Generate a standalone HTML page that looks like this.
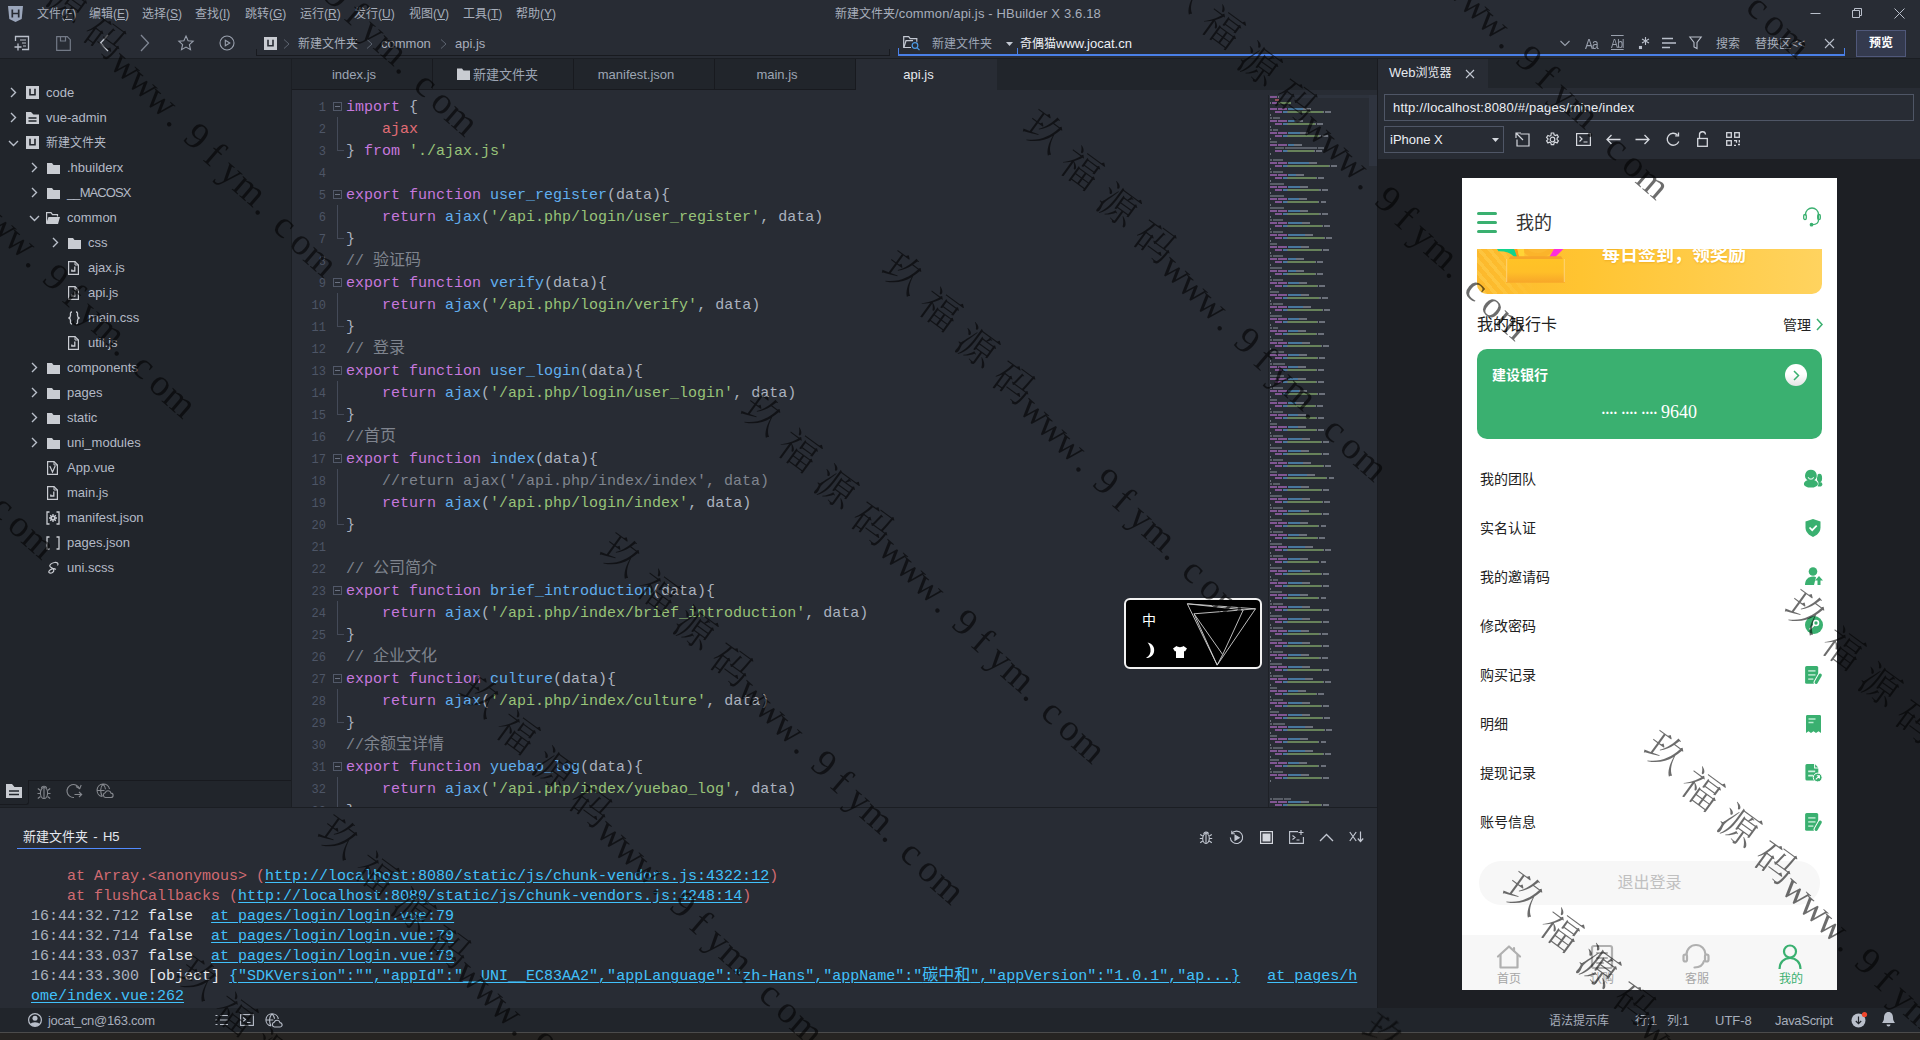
<!DOCTYPE html>
<html lang="zh-CN">
<head>
<meta charset="utf-8">
<title>新建文件夹/common/api.js - HBuilder X 3.6.18</title>
<style>
*{box-sizing:border-box;margin:0;padding:0}
html,body{width:1920px;height:1040px;overflow:hidden;background:#282c34}
body{position:relative;font-family:"Liberation Sans","Noto Sans CJK SC",sans-serif;font-size:12px;color:#abb2bf;-webkit-font-smoothing:antialiased}
.abs{position:absolute}
svg{display:block;overflow:visible}
.l{font-size:13px}
/* ---------- top bars ---------- */
#top{position:absolute;left:0;top:0;width:1920px;height:58px;background:#282c34}
#topline{position:absolute;left:0;top:58px;width:1920px;height:1px;background:#1b1e23}
.menu{position:absolute;top:6px;height:16px;line-height:16px;font-size:12px;color:#a7aebb;white-space:pre}
#title{position:absolute;top:6px;left:835px;font-size:12px;line-height:16px;color:#a7aebb;white-space:pre}
.tbi{position:absolute;top:33px}
.crumb{position:absolute;top:36px;line-height:16px;white-space:pre;color:#a7aebb}
/* ---------- sidebar ---------- */
#side{position:absolute;left:0;top:59px;width:291px;height:748px;background:#21252b}
#sideline{position:absolute;left:291px;top:59px;width:1px;height:748px;background:#1b1e23}
.tr{position:absolute;left:0;height:25px;line-height:25px;white-space:pre;color:#b4bac6}
.tr .t{position:absolute;top:0}
.ar{position:absolute;top:7px}
.ic{position:absolute;top:6px}
/* ---------- editor ---------- */
#tabs{position:absolute;left:292px;top:59px;width:1085px;height:31px;background:#21252b;z-index:1}
.tab{position:absolute;top:0;height:31px;line-height:32px;padding-right:16px;text-align:center;font-size:13px;color:#9da5b4;border-right:1px solid #181a1f;border-bottom:1px solid #181a1f;white-space:pre}
.tab.on{background:#282c34;color:#e6e9ef;border:none}
#editor{position:absolute;left:292px;top:89px;width:1085px;height:718px;background:#282c34;overflow:hidden}
#code{position:absolute;left:0;top:8px;font-family:"Liberation Mono","Noto Sans CJK SC",monospace;font-size:15px;line-height:22px;color:#abb2bf}
#code div{height:22px;position:relative}
#code .n{position:absolute;left:0;width:34px;text-align:right;font-size:12px;color:#4d5566;font-family:"Liberation Mono",monospace}
#code .c{position:absolute;left:54px;white-space:pre}
.k{color:#c678dd}.f{color:#61afef}.s{color:#98c379}.r{color:#e06c75}.m{color:#7f848e}
.fb{position:absolute;left:41px;top:5px;width:9px;height:9px;border:1px solid #515868}
.fb:after{content:"";position:absolute;left:1px;top:3px;width:5px;height:1px;background:#6b7282}
.fl{position:absolute;left:45px;top:-2px;width:1px;height:22px;background:#444a58}
.fe{position:absolute;left:45px;top:-2px;width:7px;height:12px;border-left:1px solid #444a58;border-bottom:1px solid #444a58}
/* ---------- console ---------- */
#consline{position:absolute;left:0;top:807px;width:1377px;height:1px;background:#1b1e23}
#cons{position:absolute;left:0;top:808px;width:1377px;height:200px;background:#282c34}
#log{position:absolute;left:31px;top:59px;font-family:"Liberation Mono","Noto Sans CJK SC",monospace;font-size:15px;line-height:20px;white-space:pre;color:#abb2bf}
#log .lk{color:#41c1fb;text-underline-offset:2px;text-decoration:underline}
#log .e{color:#d16b72}
#log .w{color:#e6e9ef}
/* ---------- right panel ---------- */
#rp{position:absolute;left:1377px;top:59px;width:543px;height:949px;background:#1d1f24;border-left:1px solid #191b20}
#rph{position:absolute;left:0;top:0;width:542px;height:100px;background:#282c34}
#rptabs{position:absolute;left:0;top:0;width:542px;height:29px;background:#21252b}
/* ---------- status ---------- */
#status{position:absolute;left:0;top:1008px;width:1920px;height:24px;background:#21252b}
#bottom{position:absolute;left:0;top:1032px;width:1920px;height:8px;background:#262422;border-top:1px solid #4b4b4b}
.st{position:absolute;top:5px;line-height:16px;white-space:pre;color:#a7aebb}

/* ---------- minimap ---------- */
#mmline{position:absolute;left:976px;top:6px;width:1px;height:712px;background:#1e2127}
#mmview{position:absolute;left:977px;top:6px;width:108px;height:3px;background:#2d323c}
#mmthumb{position:absolute;left:1077px;top:6px;width:8px;height:71px;background:#2f343f}
#mm{position:absolute;left:978px;top:7px}
/* ---------- phone ---------- */
#phone{position:absolute;left:84px;top:119px;width:375px;height:812px;background:#fff;overflow:hidden;font-family:"Liberation Sans","Noto Sans CJK SC",sans-serif;color:#222}
#phead{position:absolute;left:0;top:0;width:375px;height:71px;background:#fff}
#banner{position:absolute;left:15px;top:71px;width:345px;height:45px;border-radius:0 0 10px 10px;background:linear-gradient(90deg,#fcb92d,#ffc431 30%,#ffd35f);overflow:hidden}
#stripes{position:absolute;left:0;top:0;width:60px;height:45px;background:repeating-linear-gradient(50deg,rgba(255,255,255,0) 0 4.5px,rgba(255,214,90,.4) 4.5px 8px);-webkit-mask-image:linear-gradient(90deg,#000 30%,transparent)}
#card{position:absolute;left:15px;top:171px;width:345px;height:90px;border-radius:10px;background:#3ab070}
.row{position:absolute;left:18px;font-size:14px;line-height:24px;color:#222;white-space:pre}
#ptab{position:absolute;left:0;top:757px;width:375px;height:55px;background:#f7f7f7}
.pt{position:absolute;top:36px;width:50px;text-align:center;font-size:12px;line-height:16px;color:#a6a6a6;white-space:pre}
/* ---------- ime ---------- */
#ime{position:absolute;left:1124px;top:598px;width:138px;height:71px;background:#000;border:2px solid #f2f2f2;border-radius:6px}
.cj{font-size:16px;line-height:0}
#wm{position:absolute;left:0;top:0;pointer-events:none;z-index:10}
</style>
</head>
<body>
<!-- ===== title / menu bar ===== -->
<div id="top">
<svg class="abs" style="left:8px;top:6px" width="15" height="16" viewBox="0 0 15 16"><path d="M0 0h15l-1.3 13L7.5 16 1.3 13z" fill="#9ba6bb"/><path d="M4.3 3.5v8M10.7 3.5v8M4.3 7.5h6.4" stroke="#282c34" stroke-width="1.7" fill="none"/></svg>
<span class="menu" style="left:37px">文件(<u>F</u>)</span>
<span class="menu" style="left:89px">编辑(<u>E</u>)</span>
<span class="menu" style="left:142px">选择(<u>S</u>)</span>
<span class="menu" style="left:195px">查找(<u>I</u>)</span>
<span class="menu" style="left:245px">跳转(<u>G</u>)</span>
<span class="menu" style="left:300px">运行(<u>R</u>)</span>
<span class="menu" style="left:354px">发行(<u>U</u>)</span>
<span class="menu" style="left:409px">视图(<u>V</u>)</span>
<span class="menu" style="left:463px">工具(<u>T</u>)</span>
<span class="menu" style="left:516px">帮助(<u>Y</u>)</span>
<span id="title">新建文件夹<span class="l" style="letter-spacing:.15px">/common/api.js - HBuilder X 3.6.18</span></span>
<!-- window buttons -->
<svg class="abs" style="left:1810px;top:8px" width="100" height="12" viewBox="0 0 100 12" fill="none" stroke="#b9bfca" stroke-width="1"><path d="M0.5 5.5h10"/><path d="M42.500 2.500h7v7h-7zM44.500 2.500v-2h7v7h-2"/><path d="M84.500 0.500l10 10M94.500 0.500l-10 10"/></svg>
<!-- toolbar icons -->
<svg class="abs" style="left:14px;top:35px" width="16" height="16" viewBox="0 0 16 16" fill="none" stroke="#b9bfca" stroke-width="1.3"><path d="M1.500 6V1.500h13v13H8"/><path d="M6 5h6M8 8h4M9 11h3" stroke-width="1.1"/><path d="M4 8.500v7M0.500 12h7"/></svg>
<svg class="abs" style="left:56px;top:36px" width="15" height="15" viewBox="0 0 15 15" fill="none" stroke="#737a87" stroke-width="1.2"><path d="M0.700 0.700h10.600l3 3v10.600H0.700z"/><path d="M4.500 0.700v4.300h5V0.700"/></svg>
<svg class="abs" style="left:99px;top:34px" width="10" height="18" viewBox="0 0 10 18" fill="none" stroke="#c3c8d2" stroke-width="1.4"><path d="M9 1L1.500 9 9 17"/></svg>
<svg class="abs" style="left:140px;top:34px" width="10" height="18" viewBox="0 0 10 18" fill="none" stroke="#7f8693" stroke-width="1.3"><path d="M1 1l7.500 8L1 17"/></svg>
<svg class="abs" style="left:178px;top:35px" width="16" height="16" viewBox="0 0 16 16" fill="none" stroke="#9aa1ae" stroke-width="1.1"><path d="M8 1l2.100 4.700 5.100.500-3.800 3.500 1.100 5L8 12.100 3.500 14.700l1.100-5L.800 6.200l5.100-.5z"/></svg>
<svg class="abs" style="left:219px;top:35px" width="16" height="16" viewBox="0 0 16 16" fill="none" stroke="#9aa1ae" stroke-width="1.1"><circle cx="8" cy="8" r="7"/><path d="M6.300 5.200v5.600L10.800 8z"/></svg>
<svg class="abs" style="left:263.500px;top:36.500px" width="13" height="13" viewBox="0 0 13 13"><rect width="13" height="13" fill="#c9ccd2"/><path d="M4 2.800v6h5v-6" fill="none" stroke="#282c34" stroke-width="1.600"/></svg>
<svg class="abs" style="left:283px;top:39px" width="7" height="10" viewBox="0 0 7 10" fill="none" stroke="#5d6470" stroke-width="1"><path d="M1 .5l5 4.500L1 9.500"/></svg>
<span class="crumb" style="left:298px">新建文件夹</span>
<svg class="abs" style="left:366px;top:39px" width="7" height="10" viewBox="0 0 7 10" fill="none" stroke="#5d6470" stroke-width="1"><path d="M1 .5l5 4.500L1 9.500"/></svg>
<span class="crumb l" style="left:381px">common</span>
<svg class="abs" style="left:440px;top:39px" width="7" height="10" viewBox="0 0 7 10" fill="none" stroke="#5d6470" stroke-width="1"><path d="M1 .5l5 4.500L1 9.500"/></svg>
<span class="crumb l" style="left:455px">api.js</span>
<div class="abs" style="left:256px;top:49px;width:634px;height:7px;border:1px solid #181a1f;border-top:none"></div>
<!-- search box -->
<div class="abs" style="left:898px;top:48px;width:947px;height:8px;border:1px solid #4a80e8;border-top:none;border-bottom-width:2px"></div>
<div class="abs" style="left:1017px;top:48px;width:1px;height:7px;background:#4a80e8"></div>
<svg class="abs" style="left:903px;top:36px" width="18" height="15" viewBox="0 0 18 15" fill="none" stroke="#c3c8d2" stroke-width="1.2"><path d="M8 11.500H.700V.700h5l1.500 2h6.600v3"/><path d="M1 11l2-6.300h7"/><circle cx="12" cy="9.500" r="2.800" stroke="#4d9be6"/><path d="M14 11.700l2.500 2.500" stroke="#4d9be6"/></svg>
<span class="crumb" style="left:932px;color:#9da5b4">新建文件夹</span>
<svg class="abs" style="left:1006px;top:42px" width="7" height="4" viewBox="0 0 7 4"><path d="M0 0h7L3.500 4z" fill="#c3c8d2"/></svg>
<span class="crumb" style="left:1020px;color:#eceff4">奇偶猫<span class="l">www.jocat.cn</span></span>
<svg class="abs" style="left:1560px;top:40px" width="10" height="7" viewBox="0 0 10 7" fill="none" stroke="#9aa1ae" stroke-width="1.1"><path d="M.5 1l4.500 4.500L9.500 1"/></svg>
<span class="crumb" style="left:1585px;font-size:14px;letter-spacing:-1px;color:#9aa1ae;transform:scaleX(.85);transform-origin:0 50%">Aa</span>
<span class="crumb" style="left:1611px;font-size:13px;letter-spacing:-1px;color:#9aa1ae;transform:scaleX(.8);transform-origin:0 50%;text-decoration:underline overline">Abl</span>
<svg class="abs" style="left:1639px;top:36px" width="11" height="14" viewBox="0 0 11 14" fill="none" stroke="#b9bfca" stroke-width="1.1"><path d="M6.500 1v8M3 3l7 4M10 3L3 7"/><rect x=".5" y="10.500" width="2" height="2" fill="#b9bfca"/></svg>
<svg class="abs" style="left:1662px;top:37px" width="14" height="12" viewBox="0 0 14 12" fill="none" stroke="#b9bfca" stroke-width="1.3"><path d="M0 1.500h11M0 6h14M0 10.500h8"/></svg>
<svg class="abs" style="left:1689px;top:36px" width="13" height="14" viewBox="0 0 13 14" fill="none" stroke="#b9bfca" stroke-width="1.1"><path d="M.8 1h11.400L8 6.500v6L5 11V6.500z"/></svg>
<span class="crumb" style="left:1716px">搜索</span>
<span class="crumb" style="left:1755px">替换区&lt;&lt;</span>
<svg class="abs" style="left:1824px;top:38px" width="11" height="11" viewBox="0 0 11 11" fill="none" stroke="#b9bfca" stroke-width="1.1"><path d="M1 1l9 9M10 1l-9 9"/></svg>
<div class="abs" style="left:1856px;top:30px;width:50px;height:27px;background:#343a4e;border:1px solid #50587a;color:#fff;font-weight:bold;text-align:center;line-height:25px;font-size:12px">预览</div>
</div>
<div id="topline"></div>

<!-- ===== project tree ===== -->
<div id="side">
<svg class="abs" style="left:10px;top:28px" width="7" height="11" viewBox="0 0 7 11" fill="none" stroke="#b9bfca" stroke-width="1.4"><path d="M1 1l4.500 4.500L1 10"/></svg><svg class="abs" style="left:25.5px;top:27px" width="13" height="13" viewBox="0 0 13 13" ><rect width="13" height="13" fill="#c9ccd2"/><path d="M4 2.800v6h5v-6" fill="none" stroke="#21252b" stroke-width="1.600"/></svg><span class="tr l" style="left:46px;top:21px">code</span>
<svg class="abs" style="left:10px;top:53px" width="7" height="11" viewBox="0 0 7 11" fill="none" stroke="#b9bfca" stroke-width="1.4"><path d="M1 1l4.500 4.500L1 10"/></svg><svg class="abs" style="left:25.5px;top:53px" width="13" height="12" viewBox="0 0 13 12" ><path d="M0 0h5l2.500 2.500H13V12H0z" fill="#c9ccd2"/><path d="M2.500 6h8M2.500 9h8" stroke="#21252b" stroke-width="1.500"/></svg><span class="tr l" style="left:46px;top:46px">vue-admin</span>
<svg class="abs" style="left:8px;top:81px" width="11" height="7" viewBox="0 0 11 7" fill="none" stroke="#b9bfca" stroke-width="1.4"><path d="M1 1l4.500 4.500L10 1"/></svg><svg class="abs" style="left:25.5px;top:77px" width="13" height="13" viewBox="0 0 13 13" ><rect width="13" height="13" fill="#c9ccd2"/><path d="M4 2.800v6h5v-6" fill="none" stroke="#21252b" stroke-width="1.600"/></svg><span class="tr" style="left:46px;top:72px">新建文件夹</span>
<svg class="abs" style="left:31px;top:103px" width="7" height="11" viewBox="0 0 7 11" fill="none" stroke="#b9bfca" stroke-width="1.4"><path d="M1 1l4.500 4.500L1 10"/></svg><svg class="abs" style="left:46.5px;top:104px" width="13" height="11" viewBox="0 0 13 11" ><path d="M0 0h5l1.500 2H13v9H0z" fill="#c9ccd2"/></svg><span class="tr l" style="left:67px;top:96px">.hbuilderx</span>
<svg class="abs" style="left:31px;top:128px" width="7" height="11" viewBox="0 0 7 11" fill="none" stroke="#b9bfca" stroke-width="1.4"><path d="M1 1l4.500 4.500L1 10"/></svg><svg class="abs" style="left:46.5px;top:129px" width="13" height="11" viewBox="0 0 13 11" ><path d="M0 0h5l1.500 2H13v9H0z" fill="#c9ccd2"/></svg><span class="tr l" style="left:67px;top:121px;letter-spacing:-.9px">__MACOSX</span>
<svg class="abs" style="left:29px;top:156px" width="11" height="7" viewBox="0 0 11 7" fill="none" stroke="#b9bfca" stroke-width="1.4"><path d="M1 1l4.500 4.500L10 1"/></svg><svg class="abs" style="left:46px;top:153px" width="14" height="12" viewBox="0 0 14 12" ><path d="M.600 11V.600h4.400l1.500 2H11.500v2" fill="none" stroke="#c9ccd2" stroke-width="1.200"/><path d="M2.500 5H14l-2 7H0z" fill="#c9ccd2"/></svg><span class="tr l" style="left:67px;top:146px">common</span>
<svg class="abs" style="left:52px;top:178px" width="7" height="11" viewBox="0 0 7 11" fill="none" stroke="#b9bfca" stroke-width="1.4"><path d="M1 1l4.500 4.500L1 10"/></svg><svg class="abs" style="left:67.5px;top:179px" width="13" height="11" viewBox="0 0 13 11" ><path d="M0 0h5l1.500 2H13v9H0z" fill="#c9ccd2"/></svg><span class="tr l" style="left:88px;top:171px">css</span>
<svg class="abs" style="left:68px;top:202px" width="11" height="14" viewBox="0 0 11 14" ><path d="M.600.600h6.400l3.400 3.400v9.400H.600z" fill="none" stroke="#c9ccd2" stroke-width="1.200"/><path d="M7 .6v3.400h3.400" fill="none" stroke="#c9ccd2" stroke-width="1"/><path d="M6.800 5.500v4.500H3.800V8.500" fill="none" stroke="#c9ccd2" stroke-width="1.300"/></svg><span class="tr l" style="left:88px;top:196px">ajax.js</span>
<svg class="abs" style="left:68px;top:227px" width="11" height="14" viewBox="0 0 11 14" ><path d="M.600.600h6.400l3.400 3.400v9.400H.600z" fill="none" stroke="#c9ccd2" stroke-width="1.200"/><path d="M7 .6v3.400h3.400" fill="none" stroke="#c9ccd2" stroke-width="1"/><path d="M6.800 5.500v4.500H3.800V8.500" fill="none" stroke="#c9ccd2" stroke-width="1.300"/></svg><span class="tr l" style="left:88px;top:221px">api.js</span>
<svg class="abs" style="left:67px;top:252px" width="14" height="14" viewBox="0 0 14 14" ><path d="M5 1C3 1 3.500 3 3.500 4.500S3 6.700 1.500 7C3 7.300 3.500 8 3.500 9.500S3 13 5 13M9 1c2 0 1.500 2 1.500 3.500s.5 2.200 2 2.500c-1.500.300-2 1-2 2.500s.5 3.500-1.500 3.500" fill="none" stroke="#c9ccd2" stroke-width="1.300"/></svg><span class="tr l" style="left:88px;top:246px">main.css</span>
<svg class="abs" style="left:68px;top:277px" width="11" height="14" viewBox="0 0 11 14" ><path d="M.600.600h6.400l3.400 3.400v9.400H.600z" fill="none" stroke="#c9ccd2" stroke-width="1.200"/><path d="M7 .6v3.400h3.400" fill="none" stroke="#c9ccd2" stroke-width="1"/><path d="M6.800 5.500v4.500H3.800V8.500" fill="none" stroke="#c9ccd2" stroke-width="1.300"/></svg><span class="tr l" style="left:88px;top:271px">util.js</span>
<svg class="abs" style="left:31px;top:303px" width="7" height="11" viewBox="0 0 7 11" fill="none" stroke="#b9bfca" stroke-width="1.4"><path d="M1 1l4.500 4.500L1 10"/></svg><svg class="abs" style="left:46.5px;top:304px" width="13" height="11" viewBox="0 0 13 11" ><path d="M0 0h5l1.500 2H13v9H0z" fill="#c9ccd2"/></svg><span class="tr l" style="left:67px;top:296px">components</span>
<svg class="abs" style="left:31px;top:328px" width="7" height="11" viewBox="0 0 7 11" fill="none" stroke="#b9bfca" stroke-width="1.4"><path d="M1 1l4.500 4.500L1 10"/></svg><svg class="abs" style="left:46.5px;top:329px" width="13" height="11" viewBox="0 0 13 11" ><path d="M0 0h5l1.500 2H13v9H0z" fill="#c9ccd2"/></svg><span class="tr l" style="left:67px;top:321px">pages</span>
<svg class="abs" style="left:31px;top:353px" width="7" height="11" viewBox="0 0 7 11" fill="none" stroke="#b9bfca" stroke-width="1.4"><path d="M1 1l4.500 4.500L1 10"/></svg><svg class="abs" style="left:46.5px;top:354px" width="13" height="11" viewBox="0 0 13 11" ><path d="M0 0h5l1.500 2H13v9H0z" fill="#c9ccd2"/></svg><span class="tr l" style="left:67px;top:346px">static</span>
<svg class="abs" style="left:31px;top:378px" width="7" height="11" viewBox="0 0 7 11" fill="none" stroke="#b9bfca" stroke-width="1.4"><path d="M1 1l4.500 4.500L1 10"/></svg><svg class="abs" style="left:46.5px;top:379px" width="13" height="11" viewBox="0 0 13 11" ><path d="M0 0h5l1.500 2H13v9H0z" fill="#c9ccd2"/></svg><span class="tr l" style="left:67px;top:371px">uni_modules</span>
<svg class="abs" style="left:47px;top:402px" width="11" height="14" viewBox="0 0 11 14" ><path d="M.600.600h6.400l3.400 3.400v9.400H.600z" fill="none" stroke="#c9ccd2" stroke-width="1.200"/><path d="M7 .6v3.400h3.400" fill="none" stroke="#c9ccd2" stroke-width="1"/><path d="M2.800 5l2.700 6 2.700-6" fill="none" stroke="#c9ccd2" stroke-width="1.200"/></svg><span class="tr l" style="left:67px;top:396px">App.vue</span>
<svg class="abs" style="left:47px;top:427px" width="11" height="14" viewBox="0 0 11 14" ><path d="M.600.600h6.400l3.400 3.400v9.400H.600z" fill="none" stroke="#c9ccd2" stroke-width="1.200"/><path d="M7 .6v3.400h3.400" fill="none" stroke="#c9ccd2" stroke-width="1"/><path d="M6.800 5.500v4.500H3.800V8.500" fill="none" stroke="#c9ccd2" stroke-width="1.300"/></svg><span class="tr l" style="left:67px;top:421px">main.js</span>
<svg class="abs" style="left:46px;top:452px" width="14" height="14" viewBox="0 0 14 14" ><path d="M3.500 1H1v12h2.500M10.500 1H13v12h-2.500" fill="none" stroke="#c9ccd2" stroke-width="1.300"/><circle cx="7" cy="7" r="2.600" fill="#c9ccd2"/><path d="M7 3v8M3 7h8M4.200 4.200l5.600 5.600M9.800 4.200L4.200 9.800" stroke="#c9ccd2" stroke-width="1.300"/><circle cx="7" cy="7" r="1" fill="#21252b"/></svg><span class="tr l" style="left:67px;top:446px">manifest.json</span>
<svg class="abs" style="left:46px;top:477px" width="14" height="14" viewBox="0 0 14 14" ><path d="M3.500 1H1v12h2.500M10.500 1H13v12h-2.500" fill="none" stroke="#c9ccd2" stroke-width="1.300"/></svg><span class="tr l" style="left:67px;top:471px">pages.json</span>
<svg class="abs" style="left:46px;top:502px" width="14" height="14" viewBox="0 0 14 14" ><path d="M11.500 4.500C13 2.500 11 1 8.500 1.500 5.500 2 3 4 4 5.500c1 1.500 3.500 1.500 3.800 3.500.3 2-2.300 3.500-4 3-1.700-.5-1-2.500 1-3.500s4-1 5 0" fill="none" stroke="#c9ccd2" stroke-width="1.200"/></svg><span class="tr l" style="left:67px;top:496px">uni.scss</span>
<div class="abs" style="left:0;top:721px;width:291px;height:1px;background:#181a1f"></div>
<div class="abs" style="left:0;top:721px;width:29px;height:25px;background:#21252b;border-right:1px solid #181a1f;border-bottom:1px solid #181a1f;border-radius:0 0 3px 0"></div>
<svg class="abs" style="left:6px;top:725px" width="16" height="14" viewBox="0 0 16 14" ><path d="M0 0h6l2.500 3H16v11H0z" fill="#c9ccd2"/><path d="M3 7h10M3 10.500h10" stroke="#21252b" stroke-width="1.600"/></svg>
<svg class="abs" style="left:37px;top:725px" width="14" height="16" viewBox="0 0 14 16" fill="none" stroke="#85888e" stroke-width="1.100"><ellipse cx="7" cy="9" rx="3.600" ry="5.500"/><path d="M7 3.500v11M4.500 4.200C4.500 1.500 9.500 1.500 9.500 4.200M3.500 6.500L.800 4.500M3.400 9.500H.5M3.500 12.500L.800 14.500M10.500 6.500l2.700-2M10.600 9.500h2.900M10.500 12.500l2.700 2"/></svg>
<svg class="abs" style="left:66px;top:724px" width="17" height="16" viewBox="0 0 17 16" fill="none" stroke="#85888e" stroke-width="1.100"><path d="M13.500 5.500A6.500 6.500 0 1 0 8 14.500"/><path d="M10 3.500l3.700 2.200 1.500-3.700M8.500 11.500h7M13 9l2.700 2.500L13 14"/></svg>
<svg class="abs" style="left:96px;top:724px" width="17" height="16" viewBox="0 0 17 16" fill="none" stroke="#85888e" stroke-width="1.100"><path d="M6 13.500A6.300 6.300 0 1 1 13.500 6M1 7.500h7.500M7 1.200C4 4 4 10 6.500 13.500M7 1.200c1.500 1.500 2.300 3.300 2.500 5"/><path d="M9.500 14.500h5.300a2.200 2.200 0 0 0 .2-4.400 3 3 0 0 0-5.800-.3 2.400 2.400 0 0 0 .3 4.700z"/></svg>
</div><div id="sideline"></div>
<!-- ===== editor tabs ===== -->
<div id="tabs">
<div class="tab" style="left:0;width:141px">index.js</div>
<div class="tab" style="left:141px;width:141px;padding-left:5px"><svg style="display:inline-block;vertical-align:-1px;margin-right:3px" width="13" height="12" viewBox="0 0 13 12"><path d="M0 .5h5l1.500 2H13V12H0z" fill="#c9ccd2"/></svg><span style="font-size:13px">新建文件夹</span></div>
<div class="tab" style="left:282px;width:141px">manifest.json</div>
<div class="tab" style="left:423px;width:141px">main.js</div>
<div class="tab on" style="left:564px;width:141px">api.js</div>
</div>

<!-- ===== editor ===== -->
<div id="editor"><div id="code">
<div><span class="n">1</span><i class="fb"></i><span class="c"><span class="k">import</span> {</span></div>
<div><span class="n">2</span><i class="fl"></i><span class="c">    <span class="r">ajax</span></span></div>
<div><span class="n">3</span><i class="fe"></i><span class="c">} <span class="k">from</span> <span class="s">'./ajax.js'</span></span></div>
<div><span class="n">4</span><span class="c"></span></div>
<div><span class="n">5</span><i class="fb"></i><span class="c"><span class="k">export</span> <span class="k">function</span> <span class="f">user_register</span>(data){</span></div>
<div><span class="n">6</span><i class="fl"></i><span class="c">    <span class="k">return</span> <span class="f">ajax</span>(<span class="s">'/api.php/login/user_register'</span>, data)</span></div>
<div><span class="n">7</span><i class="fe"></i><span class="c">}</span></div>
<div><span class="n">8</span><span class="c"><span class="m">// <span class="cj">验证码</span></span></span></div>
<div><span class="n">9</span><i class="fb"></i><span class="c"><span class="k">export</span> <span class="k">function</span> <span class="f">verify</span>(data){</span></div>
<div><span class="n">10</span><i class="fl"></i><span class="c">    <span class="k">return</span> <span class="f">ajax</span>(<span class="s">'/api.php/login/verify'</span>, data)</span></div>
<div><span class="n">11</span><i class="fe"></i><span class="c">}</span></div>
<div><span class="n">12</span><span class="c"><span class="m">// <span class="cj">登录</span></span></span></div>
<div><span class="n">13</span><i class="fb"></i><span class="c"><span class="k">export</span> <span class="k">function</span> <span class="f">user_login</span>(data){</span></div>
<div><span class="n">14</span><i class="fl"></i><span class="c">    <span class="k">return</span> <span class="f">ajax</span>(<span class="s">'/api.php/login/user_login'</span>, data)</span></div>
<div><span class="n">15</span><i class="fe"></i><span class="c">}</span></div>
<div><span class="n">16</span><span class="c"><span class="m">//<span class="cj">首页</span></span></span></div>
<div><span class="n">17</span><i class="fb"></i><span class="c"><span class="k">export</span> <span class="k">function</span> <span class="f">index</span>(data){</span></div>
<div><span class="n">18</span><i class="fl"></i><span class="c">    <span class="m">//return ajax('/api.php/index/index', data)</span></span></div>
<div><span class="n">19</span><i class="fl"></i><span class="c">    <span class="k">return</span> <span class="f">ajax</span>(<span class="s">'/api.php/login/index'</span>, data)</span></div>
<div><span class="n">20</span><i class="fe"></i><span class="c">}</span></div>
<div><span class="n">21</span><span class="c"></span></div>
<div><span class="n">22</span><span class="c"><span class="m">// <span class="cj">公司简介</span></span></span></div>
<div><span class="n">23</span><i class="fb"></i><span class="c"><span class="k">export</span> <span class="k">function</span> <span class="f">brief_introduction</span>(data){</span></div>
<div><span class="n">24</span><i class="fl"></i><span class="c">    <span class="k">return</span> <span class="f">ajax</span>(<span class="s">'/api.php/index/brief_introduction'</span>, data)</span></div>
<div><span class="n">25</span><i class="fe"></i><span class="c">}</span></div>
<div><span class="n">26</span><span class="c"><span class="m">// <span class="cj">企业文化</span></span></span></div>
<div><span class="n">27</span><i class="fb"></i><span class="c"><span class="k">export</span> <span class="k">function</span> <span class="f">culture</span>(data){</span></div>
<div><span class="n">28</span><i class="fl"></i><span class="c">    <span class="k">return</span> <span class="f">ajax</span>(<span class="s">'/api.php/index/culture'</span>, data)</span></div>
<div><span class="n">29</span><i class="fe"></i><span class="c">}</span></div>
<div><span class="n">30</span><span class="c"><span class="m">//<span class="cj">余额宝详情</span></span></span></div>
<div><span class="n">31</span><i class="fb"></i><span class="c"><span class="k">export</span> <span class="k">function</span> <span class="f">yuebao_log</span>(data){</span></div>
<div><span class="n">32</span><i class="fl"></i><span class="c">    <span class="k">return</span> <span class="f">ajax</span>(<span class="s">'/api.php/index/yuebao_log'</span>, data)</span></div>
<div><span class="n">33</span><i class="fe"></i><span class="c">}</span></div>
</div>
<div id="mmview"></div><div id="mmthumb"></div><div id="mmline"></div>
<svg id="mm" width="110" height="712" viewBox="0 0 110 712" shape-rendering="crispEdges" style="overflow:hidden">
<rect x="0.0" y="0" width="6.9" height="2" fill="#815693"/>
<rect x="8.0" y="0" width="1.1" height="2" fill="#6c717b"/>
<rect x="4.6" y="3" width="4.6" height="2" fill="#904f58"/>
<rect x="0.0" y="6" width="1.1" height="2" fill="#6c717b"/>
<rect x="2.3" y="6" width="4.6" height="2" fill="#815693"/>
<rect x="8.0" y="6" width="12.6" height="2" fill="#67825a"/>
<rect x="0.0" y="12" width="6.9" height="2" fill="#815693"/>
<rect x="8.0" y="12" width="9.2" height="2" fill="#815693"/>
<rect x="18.4" y="12" width="14.9" height="2" fill="#47769d"/>
<rect x="33.3" y="12" width="8.0" height="2" fill="#6c717b"/>
<rect x="4.6" y="15" width="6.9" height="2" fill="#815693"/>
<rect x="12.6" y="15" width="4.6" height="2" fill="#47769d"/>
<rect x="17.2" y="15" width="1.1" height="2" fill="#6c717b"/>
<rect x="18.4" y="15" width="34.5" height="2" fill="#67825a"/>
<rect x="52.9" y="15" width="1.1" height="2" fill="#6c717b"/>
<rect x="55.2" y="15" width="5.8" height="2" fill="#6c717b"/>
<rect x="0.0" y="18" width="1.1" height="2" fill="#6c717b"/>
<rect x="0.0" y="21" width="2.3" height="2" fill="#595e67"/>
<rect x="3.4" y="21" width="6.9" height="2" fill="#595e67"/>
<rect x="0.0" y="24" width="6.9" height="2" fill="#815693"/>
<rect x="8.0" y="24" width="9.2" height="2" fill="#815693"/>
<rect x="18.4" y="24" width="6.9" height="2" fill="#47769d"/>
<rect x="25.3" y="24" width="8.0" height="2" fill="#6c717b"/>
<rect x="4.6" y="27" width="6.9" height="2" fill="#815693"/>
<rect x="12.6" y="27" width="4.6" height="2" fill="#47769d"/>
<rect x="17.2" y="27" width="1.1" height="2" fill="#6c717b"/>
<rect x="18.4" y="27" width="26.4" height="2" fill="#67825a"/>
<rect x="44.8" y="27" width="1.1" height="2" fill="#6c717b"/>
<rect x="47.1" y="27" width="5.8" height="2" fill="#6c717b"/>
<rect x="0.0" y="30" width="1.1" height="2" fill="#6c717b"/>
<rect x="0.0" y="33" width="2.3" height="2" fill="#595e67"/>
<rect x="3.4" y="33" width="4.6" height="2" fill="#595e67"/>
<rect x="0.0" y="36" width="6.9" height="2" fill="#815693"/>
<rect x="8.0" y="36" width="9.2" height="2" fill="#815693"/>
<rect x="18.4" y="36" width="11.5" height="2" fill="#47769d"/>
<rect x="29.9" y="36" width="8.0" height="2" fill="#6c717b"/>
<rect x="4.6" y="39" width="6.9" height="2" fill="#815693"/>
<rect x="12.6" y="39" width="4.6" height="2" fill="#47769d"/>
<rect x="17.2" y="39" width="1.1" height="2" fill="#6c717b"/>
<rect x="18.4" y="39" width="31.0" height="2" fill="#67825a"/>
<rect x="49.4" y="39" width="1.1" height="2" fill="#6c717b"/>
<rect x="51.7" y="39" width="5.8" height="2" fill="#6c717b"/>
<rect x="0.0" y="42" width="1.1" height="2" fill="#6c717b"/>
<rect x="0.0" y="45" width="6.9" height="2" fill="#595e67"/>
<rect x="0.0" y="48" width="6.9" height="2" fill="#815693"/>
<rect x="8.0" y="48" width="9.2" height="2" fill="#815693"/>
<rect x="18.4" y="48" width="5.8" height="2" fill="#47769d"/>
<rect x="24.1" y="48" width="8.0" height="2" fill="#6c717b"/>
<rect x="4.6" y="51" width="9.2" height="2" fill="#595e67"/>
<rect x="14.9" y="51" width="32.2" height="2" fill="#595e67"/>
<rect x="48.3" y="51" width="5.8" height="2" fill="#595e67"/>
<rect x="4.6" y="54" width="6.9" height="2" fill="#815693"/>
<rect x="12.6" y="54" width="4.6" height="2" fill="#47769d"/>
<rect x="17.2" y="54" width="1.1" height="2" fill="#6c717b"/>
<rect x="18.4" y="54" width="25.3" height="2" fill="#67825a"/>
<rect x="43.7" y="54" width="1.1" height="2" fill="#6c717b"/>
<rect x="46.0" y="54" width="5.8" height="2" fill="#6c717b"/>
<rect x="0.0" y="57" width="1.1" height="2" fill="#6c717b"/>
<rect x="0.0" y="63" width="2.3" height="2" fill="#595e67"/>
<rect x="3.4" y="63" width="9.2" height="2" fill="#595e67"/>
<rect x="0.0" y="66" width="6.9" height="2" fill="#815693"/>
<rect x="8.0" y="66" width="9.2" height="2" fill="#815693"/>
<rect x="18.4" y="66" width="20.7" height="2" fill="#47769d"/>
<rect x="39.1" y="66" width="8.0" height="2" fill="#6c717b"/>
<rect x="4.6" y="69" width="6.9" height="2" fill="#815693"/>
<rect x="12.6" y="69" width="4.6" height="2" fill="#47769d"/>
<rect x="17.2" y="69" width="1.1" height="2" fill="#6c717b"/>
<rect x="18.4" y="69" width="40.2" height="2" fill="#67825a"/>
<rect x="58.6" y="69" width="1.1" height="2" fill="#6c717b"/>
<rect x="60.9" y="69" width="5.8" height="2" fill="#6c717b"/>
<rect x="0.0" y="72" width="1.1" height="2" fill="#6c717b"/>
<rect x="0.0" y="75" width="2.3" height="2" fill="#595e67"/>
<rect x="3.4" y="75" width="9.2" height="2" fill="#595e67"/>
<rect x="0.0" y="78" width="6.9" height="2" fill="#815693"/>
<rect x="8.0" y="78" width="9.2" height="2" fill="#815693"/>
<rect x="18.4" y="78" width="8.0" height="2" fill="#47769d"/>
<rect x="26.4" y="78" width="8.0" height="2" fill="#6c717b"/>
<rect x="4.6" y="81" width="6.9" height="2" fill="#815693"/>
<rect x="12.6" y="81" width="4.6" height="2" fill="#47769d"/>
<rect x="17.2" y="81" width="1.1" height="2" fill="#6c717b"/>
<rect x="18.4" y="81" width="27.6" height="2" fill="#67825a"/>
<rect x="46.0" y="81" width="1.1" height="2" fill="#6c717b"/>
<rect x="48.3" y="81" width="5.8" height="2" fill="#6c717b"/>
<rect x="0.0" y="84" width="1.1" height="2" fill="#6c717b"/>
<rect x="0.0" y="87" width="13.8" height="2" fill="#595e67"/>
<rect x="0.0" y="90" width="6.9" height="2" fill="#815693"/>
<rect x="8.0" y="90" width="9.2" height="2" fill="#815693"/>
<rect x="18.4" y="90" width="11.5" height="2" fill="#47769d"/>
<rect x="29.9" y="90" width="8.0" height="2" fill="#6c717b"/>
<rect x="4.6" y="93" width="6.9" height="2" fill="#815693"/>
<rect x="12.6" y="93" width="4.6" height="2" fill="#47769d"/>
<rect x="17.2" y="93" width="1.1" height="2" fill="#6c717b"/>
<rect x="18.4" y="93" width="31.0" height="2" fill="#67825a"/>
<rect x="49.4" y="93" width="1.1" height="2" fill="#6c717b"/>
<rect x="51.7" y="93" width="5.8" height="2" fill="#6c717b"/>
<rect x="0.0" y="96" width="1.1" height="2" fill="#6c717b"/>
<rect x="0.0" y="99" width="13.8" height="2" fill="#595e67"/>
<rect x="0.0" y="102" width="6.9" height="2" fill="#815693"/>
<rect x="8.0" y="102" width="9.2" height="2" fill="#815693"/>
<rect x="18.4" y="102" width="10.3" height="2" fill="#47769d"/>
<rect x="28.7" y="102" width="8.0" height="2" fill="#6c717b"/>
<rect x="4.6" y="105" width="6.9" height="2" fill="#815693"/>
<rect x="12.6" y="105" width="4.6" height="2" fill="#47769d"/>
<rect x="17.2" y="105" width="1.1" height="2" fill="#6c717b"/>
<rect x="18.4" y="105" width="29.9" height="2" fill="#67825a"/>
<rect x="48.3" y="105" width="1.1" height="2" fill="#6c717b"/>
<rect x="50.6" y="105" width="5.8" height="2" fill="#6c717b"/>
<rect x="0.0" y="108" width="1.1" height="2" fill="#6c717b"/>
<rect x="0.0" y="111" width="13.8" height="2" fill="#595e67"/>
<rect x="0.0" y="114" width="6.9" height="2" fill="#815693"/>
<rect x="8.0" y="114" width="9.2" height="2" fill="#815693"/>
<rect x="18.4" y="114" width="11.5" height="2" fill="#47769d"/>
<rect x="29.9" y="114" width="8.0" height="2" fill="#6c717b"/>
<rect x="4.6" y="117" width="6.9" height="2" fill="#815693"/>
<rect x="12.6" y="117" width="4.6" height="2" fill="#47769d"/>
<rect x="17.2" y="117" width="1.1" height="2" fill="#6c717b"/>
<rect x="18.4" y="117" width="31.0" height="2" fill="#67825a"/>
<rect x="49.4" y="117" width="1.1" height="2" fill="#6c717b"/>
<rect x="51.7" y="117" width="5.8" height="2" fill="#6c717b"/>
<rect x="0.0" y="120" width="1.1" height="2" fill="#6c717b"/>
<rect x="0.0" y="123" width="2.3" height="2" fill="#595e67"/>
<rect x="3.4" y="123" width="9.2" height="2" fill="#595e67"/>
<rect x="0.0" y="126" width="6.9" height="2" fill="#815693"/>
<rect x="8.0" y="126" width="9.2" height="2" fill="#815693"/>
<rect x="18.4" y="126" width="13.8" height="2" fill="#47769d"/>
<rect x="32.2" y="126" width="8.0" height="2" fill="#6c717b"/>
<rect x="4.6" y="129" width="6.9" height="2" fill="#815693"/>
<rect x="12.6" y="129" width="4.6" height="2" fill="#47769d"/>
<rect x="17.2" y="129" width="1.1" height="2" fill="#6c717b"/>
<rect x="18.4" y="129" width="33.3" height="2" fill="#67825a"/>
<rect x="51.7" y="129" width="1.1" height="2" fill="#6c717b"/>
<rect x="54.0" y="129" width="5.8" height="2" fill="#6c717b"/>
<rect x="0.0" y="132" width="1.1" height="2" fill="#6c717b"/>
<rect x="0.0" y="135" width="2.3" height="2" fill="#595e67"/>
<rect x="3.4" y="135" width="9.2" height="2" fill="#595e67"/>
<rect x="0.0" y="138" width="6.9" height="2" fill="#815693"/>
<rect x="8.0" y="138" width="9.2" height="2" fill="#815693"/>
<rect x="18.4" y="138" width="16.1" height="2" fill="#47769d"/>
<rect x="34.5" y="138" width="8.0" height="2" fill="#6c717b"/>
<rect x="4.6" y="141" width="6.9" height="2" fill="#815693"/>
<rect x="12.6" y="141" width="4.6" height="2" fill="#47769d"/>
<rect x="17.2" y="141" width="1.1" height="2" fill="#6c717b"/>
<rect x="18.4" y="141" width="35.6" height="2" fill="#67825a"/>
<rect x="54.0" y="141" width="1.1" height="2" fill="#6c717b"/>
<rect x="56.3" y="141" width="5.8" height="2" fill="#6c717b"/>
<rect x="0.0" y="144" width="1.1" height="2" fill="#6c717b"/>
<rect x="0.0" y="147" width="6.9" height="2" fill="#595e67"/>
<rect x="0.0" y="150" width="6.9" height="2" fill="#815693"/>
<rect x="8.0" y="150" width="9.2" height="2" fill="#815693"/>
<rect x="18.4" y="150" width="12.6" height="2" fill="#47769d"/>
<rect x="31.0" y="150" width="8.0" height="2" fill="#6c717b"/>
<rect x="4.6" y="153" width="6.9" height="2" fill="#815693"/>
<rect x="12.6" y="153" width="4.6" height="2" fill="#47769d"/>
<rect x="17.2" y="153" width="1.1" height="2" fill="#6c717b"/>
<rect x="18.4" y="153" width="32.2" height="2" fill="#67825a"/>
<rect x="50.6" y="153" width="1.1" height="2" fill="#6c717b"/>
<rect x="52.9" y="153" width="5.8" height="2" fill="#6c717b"/>
<rect x="0.0" y="156" width="1.1" height="2" fill="#6c717b"/>
<rect x="0.0" y="159" width="2.3" height="2" fill="#595e67"/>
<rect x="3.4" y="159" width="9.2" height="2" fill="#595e67"/>
<rect x="0.0" y="162" width="6.9" height="2" fill="#815693"/>
<rect x="8.0" y="162" width="9.2" height="2" fill="#815693"/>
<rect x="18.4" y="162" width="8.0" height="2" fill="#47769d"/>
<rect x="26.4" y="162" width="8.0" height="2" fill="#6c717b"/>
<rect x="4.6" y="165" width="6.9" height="2" fill="#815693"/>
<rect x="12.6" y="165" width="4.6" height="2" fill="#47769d"/>
<rect x="17.2" y="165" width="1.1" height="2" fill="#6c717b"/>
<rect x="18.4" y="165" width="26.4" height="2" fill="#67825a"/>
<rect x="44.8" y="165" width="1.1" height="2" fill="#6c717b"/>
<rect x="47.1" y="165" width="5.8" height="2" fill="#6c717b"/>
<rect x="0.0" y="168" width="1.1" height="2" fill="#6c717b"/>
<rect x="0.0" y="171" width="11.5" height="2" fill="#595e67"/>
<rect x="0.0" y="174" width="6.9" height="2" fill="#815693"/>
<rect x="8.0" y="174" width="9.2" height="2" fill="#815693"/>
<rect x="18.4" y="174" width="8.0" height="2" fill="#47769d"/>
<rect x="26.4" y="174" width="8.0" height="2" fill="#6c717b"/>
<rect x="4.6" y="177" width="6.9" height="2" fill="#815693"/>
<rect x="12.6" y="177" width="4.6" height="2" fill="#47769d"/>
<rect x="17.2" y="177" width="1.1" height="2" fill="#6c717b"/>
<rect x="18.4" y="177" width="26.4" height="2" fill="#67825a"/>
<rect x="44.8" y="177" width="1.1" height="2" fill="#6c717b"/>
<rect x="47.1" y="177" width="5.8" height="2" fill="#6c717b"/>
<rect x="0.0" y="180" width="1.1" height="2" fill="#6c717b"/>
<rect x="0.0" y="183" width="2.3" height="2" fill="#595e67"/>
<rect x="3.4" y="183" width="9.2" height="2" fill="#595e67"/>
<rect x="0.0" y="186" width="6.9" height="2" fill="#815693"/>
<rect x="8.0" y="186" width="9.2" height="2" fill="#815693"/>
<rect x="18.4" y="186" width="10.3" height="2" fill="#47769d"/>
<rect x="28.7" y="186" width="8.0" height="2" fill="#6c717b"/>
<rect x="4.6" y="189" width="6.9" height="2" fill="#815693"/>
<rect x="12.6" y="189" width="4.6" height="2" fill="#47769d"/>
<rect x="17.2" y="189" width="1.1" height="2" fill="#6c717b"/>
<rect x="18.4" y="189" width="28.7" height="2" fill="#67825a"/>
<rect x="47.1" y="189" width="1.1" height="2" fill="#6c717b"/>
<rect x="49.4" y="189" width="5.8" height="2" fill="#6c717b"/>
<rect x="0.0" y="192" width="1.1" height="2" fill="#6c717b"/>
<rect x="0.0" y="195" width="9.2" height="2" fill="#595e67"/>
<rect x="0.0" y="198" width="6.9" height="2" fill="#815693"/>
<rect x="8.0" y="198" width="9.2" height="2" fill="#815693"/>
<rect x="18.4" y="198" width="12.6" height="2" fill="#47769d"/>
<rect x="31.0" y="198" width="8.0" height="2" fill="#6c717b"/>
<rect x="4.6" y="201" width="6.9" height="2" fill="#815693"/>
<rect x="12.6" y="201" width="4.6" height="2" fill="#47769d"/>
<rect x="17.2" y="201" width="1.1" height="2" fill="#6c717b"/>
<rect x="18.4" y="201" width="31.0" height="2" fill="#67825a"/>
<rect x="49.4" y="201" width="1.1" height="2" fill="#6c717b"/>
<rect x="51.7" y="201" width="5.8" height="2" fill="#6c717b"/>
<rect x="0.0" y="204" width="1.1" height="2" fill="#6c717b"/>
<rect x="0.0" y="207" width="2.3" height="2" fill="#595e67"/>
<rect x="3.4" y="207" width="9.2" height="2" fill="#595e67"/>
<rect x="0.0" y="210" width="6.9" height="2" fill="#815693"/>
<rect x="8.0" y="210" width="9.2" height="2" fill="#815693"/>
<rect x="18.4" y="210" width="14.9" height="2" fill="#47769d"/>
<rect x="33.3" y="210" width="8.0" height="2" fill="#6c717b"/>
<rect x="4.6" y="213" width="6.9" height="2" fill="#815693"/>
<rect x="12.6" y="213" width="4.6" height="2" fill="#47769d"/>
<rect x="17.2" y="213" width="1.1" height="2" fill="#6c717b"/>
<rect x="18.4" y="213" width="33.3" height="2" fill="#67825a"/>
<rect x="51.7" y="213" width="1.1" height="2" fill="#6c717b"/>
<rect x="54.0" y="213" width="5.8" height="2" fill="#6c717b"/>
<rect x="0.0" y="216" width="1.1" height="2" fill="#6c717b"/>
<rect x="0.0" y="219" width="11.5" height="2" fill="#595e67"/>
<rect x="0.0" y="222" width="6.9" height="2" fill="#815693"/>
<rect x="8.0" y="222" width="9.2" height="2" fill="#815693"/>
<rect x="18.4" y="222" width="10.3" height="2" fill="#47769d"/>
<rect x="28.7" y="222" width="8.0" height="2" fill="#6c717b"/>
<rect x="4.6" y="225" width="6.9" height="2" fill="#815693"/>
<rect x="12.6" y="225" width="4.6" height="2" fill="#47769d"/>
<rect x="17.2" y="225" width="1.1" height="2" fill="#6c717b"/>
<rect x="18.4" y="225" width="28.7" height="2" fill="#67825a"/>
<rect x="47.1" y="225" width="1.1" height="2" fill="#6c717b"/>
<rect x="49.4" y="225" width="5.8" height="2" fill="#6c717b"/>
<rect x="0.0" y="228" width="1.1" height="2" fill="#6c717b"/>
<rect x="0.0" y="231" width="2.3" height="2" fill="#595e67"/>
<rect x="3.4" y="231" width="4.6" height="2" fill="#595e67"/>
<rect x="0.0" y="234" width="6.9" height="2" fill="#815693"/>
<rect x="8.0" y="234" width="9.2" height="2" fill="#815693"/>
<rect x="18.4" y="234" width="9.2" height="2" fill="#47769d"/>
<rect x="27.6" y="234" width="8.0" height="2" fill="#6c717b"/>
<rect x="4.6" y="237" width="6.9" height="2" fill="#815693"/>
<rect x="12.6" y="237" width="4.6" height="2" fill="#47769d"/>
<rect x="17.2" y="237" width="1.1" height="2" fill="#6c717b"/>
<rect x="18.4" y="237" width="27.6" height="2" fill="#67825a"/>
<rect x="46.0" y="237" width="1.1" height="2" fill="#6c717b"/>
<rect x="48.3" y="237" width="5.8" height="2" fill="#6c717b"/>
<rect x="0.0" y="240" width="1.1" height="2" fill="#6c717b"/>
<rect x="0.0" y="243" width="2.3" height="2" fill="#595e67"/>
<rect x="3.4" y="243" width="9.2" height="2" fill="#595e67"/>
<rect x="0.0" y="246" width="6.9" height="2" fill="#815693"/>
<rect x="8.0" y="246" width="9.2" height="2" fill="#815693"/>
<rect x="18.4" y="246" width="13.8" height="2" fill="#47769d"/>
<rect x="32.2" y="246" width="8.0" height="2" fill="#6c717b"/>
<rect x="4.6" y="249" width="6.9" height="2" fill="#815693"/>
<rect x="12.6" y="249" width="4.6" height="2" fill="#47769d"/>
<rect x="17.2" y="249" width="1.1" height="2" fill="#6c717b"/>
<rect x="18.4" y="249" width="32.2" height="2" fill="#67825a"/>
<rect x="50.6" y="249" width="1.1" height="2" fill="#6c717b"/>
<rect x="52.9" y="249" width="5.8" height="2" fill="#6c717b"/>
<rect x="0.0" y="252" width="1.1" height="2" fill="#6c717b"/>
<rect x="0.0" y="255" width="13.8" height="2" fill="#595e67"/>
<rect x="0.0" y="258" width="6.9" height="2" fill="#815693"/>
<rect x="8.0" y="258" width="9.2" height="2" fill="#815693"/>
<rect x="18.4" y="258" width="10.3" height="2" fill="#47769d"/>
<rect x="28.7" y="258" width="8.0" height="2" fill="#6c717b"/>
<rect x="4.6" y="261" width="6.9" height="2" fill="#815693"/>
<rect x="12.6" y="261" width="4.6" height="2" fill="#47769d"/>
<rect x="17.2" y="261" width="1.1" height="2" fill="#6c717b"/>
<rect x="18.4" y="261" width="28.7" height="2" fill="#67825a"/>
<rect x="47.1" y="261" width="1.1" height="2" fill="#6c717b"/>
<rect x="49.4" y="261" width="5.8" height="2" fill="#6c717b"/>
<rect x="0.0" y="264" width="1.1" height="2" fill="#6c717b"/>
<rect x="0.0" y="267" width="2.3" height="2" fill="#595e67"/>
<rect x="3.4" y="267" width="11.5" height="2" fill="#595e67"/>
<rect x="0.0" y="270" width="6.9" height="2" fill="#815693"/>
<rect x="8.0" y="270" width="9.2" height="2" fill="#815693"/>
<rect x="18.4" y="270" width="9.2" height="2" fill="#47769d"/>
<rect x="27.6" y="270" width="8.0" height="2" fill="#6c717b"/>
<rect x="4.6" y="273" width="6.9" height="2" fill="#815693"/>
<rect x="12.6" y="273" width="4.6" height="2" fill="#47769d"/>
<rect x="17.2" y="273" width="1.1" height="2" fill="#6c717b"/>
<rect x="18.4" y="273" width="27.6" height="2" fill="#67825a"/>
<rect x="46.0" y="273" width="1.1" height="2" fill="#6c717b"/>
<rect x="48.3" y="273" width="5.8" height="2" fill="#6c717b"/>
<rect x="0.0" y="276" width="1.1" height="2" fill="#6c717b"/>
<rect x="0.0" y="279" width="13.8" height="2" fill="#595e67"/>
<rect x="0.0" y="282" width="6.9" height="2" fill="#815693"/>
<rect x="8.0" y="282" width="9.2" height="2" fill="#815693"/>
<rect x="18.4" y="282" width="9.2" height="2" fill="#47769d"/>
<rect x="27.6" y="282" width="8.0" height="2" fill="#6c717b"/>
<rect x="4.6" y="285" width="6.9" height="2" fill="#815693"/>
<rect x="12.6" y="285" width="4.6" height="2" fill="#47769d"/>
<rect x="17.2" y="285" width="1.1" height="2" fill="#6c717b"/>
<rect x="18.4" y="285" width="27.6" height="2" fill="#67825a"/>
<rect x="46.0" y="285" width="1.1" height="2" fill="#6c717b"/>
<rect x="48.3" y="285" width="5.8" height="2" fill="#6c717b"/>
<rect x="0.0" y="288" width="1.1" height="2" fill="#6c717b"/>
<rect x="0.0" y="291" width="2.3" height="2" fill="#595e67"/>
<rect x="3.4" y="291" width="9.2" height="2" fill="#595e67"/>
<rect x="0.0" y="294" width="6.9" height="2" fill="#815693"/>
<rect x="8.0" y="294" width="9.2" height="2" fill="#815693"/>
<rect x="18.4" y="294" width="10.3" height="2" fill="#47769d"/>
<rect x="28.7" y="294" width="8.0" height="2" fill="#6c717b"/>
<rect x="4.6" y="297" width="6.9" height="2" fill="#815693"/>
<rect x="12.6" y="297" width="4.6" height="2" fill="#47769d"/>
<rect x="17.2" y="297" width="1.1" height="2" fill="#6c717b"/>
<rect x="18.4" y="297" width="28.7" height="2" fill="#67825a"/>
<rect x="47.1" y="297" width="1.1" height="2" fill="#6c717b"/>
<rect x="49.4" y="297" width="5.8" height="2" fill="#6c717b"/>
<rect x="0.0" y="300" width="1.1" height="2" fill="#6c717b"/>
<rect x="0.0" y="303" width="6.9" height="2" fill="#595e67"/>
<rect x="0.0" y="306" width="6.9" height="2" fill="#815693"/>
<rect x="8.0" y="306" width="9.2" height="2" fill="#815693"/>
<rect x="18.4" y="306" width="8.0" height="2" fill="#47769d"/>
<rect x="26.4" y="306" width="8.0" height="2" fill="#6c717b"/>
<rect x="4.6" y="309" width="6.9" height="2" fill="#815693"/>
<rect x="12.6" y="309" width="4.6" height="2" fill="#47769d"/>
<rect x="17.2" y="309" width="1.1" height="2" fill="#6c717b"/>
<rect x="18.4" y="309" width="26.4" height="2" fill="#67825a"/>
<rect x="44.8" y="309" width="1.1" height="2" fill="#6c717b"/>
<rect x="47.1" y="309" width="5.8" height="2" fill="#6c717b"/>
<rect x="0.0" y="312" width="1.1" height="2" fill="#6c717b"/>
<rect x="0.0" y="315" width="2.3" height="2" fill="#595e67"/>
<rect x="3.4" y="315" width="9.2" height="2" fill="#595e67"/>
<rect x="0.0" y="318" width="6.9" height="2" fill="#815693"/>
<rect x="8.0" y="318" width="9.2" height="2" fill="#815693"/>
<rect x="18.4" y="318" width="9.2" height="2" fill="#47769d"/>
<rect x="27.6" y="318" width="8.0" height="2" fill="#6c717b"/>
<rect x="4.6" y="321" width="6.9" height="2" fill="#815693"/>
<rect x="12.6" y="321" width="4.6" height="2" fill="#47769d"/>
<rect x="17.2" y="321" width="1.1" height="2" fill="#6c717b"/>
<rect x="18.4" y="321" width="27.6" height="2" fill="#67825a"/>
<rect x="46.0" y="321" width="1.1" height="2" fill="#6c717b"/>
<rect x="48.3" y="321" width="5.8" height="2" fill="#6c717b"/>
<rect x="0.0" y="324" width="1.1" height="2" fill="#6c717b"/>
<rect x="0.0" y="327" width="6.9" height="2" fill="#595e67"/>
<rect x="0.0" y="330" width="6.9" height="2" fill="#815693"/>
<rect x="8.0" y="330" width="9.2" height="2" fill="#815693"/>
<rect x="18.4" y="330" width="9.2" height="2" fill="#47769d"/>
<rect x="27.6" y="330" width="8.0" height="2" fill="#6c717b"/>
<rect x="4.6" y="333" width="6.9" height="2" fill="#815693"/>
<rect x="12.6" y="333" width="4.6" height="2" fill="#47769d"/>
<rect x="17.2" y="333" width="1.1" height="2" fill="#6c717b"/>
<rect x="18.4" y="333" width="27.6" height="2" fill="#67825a"/>
<rect x="46.0" y="333" width="1.1" height="2" fill="#6c717b"/>
<rect x="48.3" y="333" width="5.8" height="2" fill="#6c717b"/>
<rect x="0.0" y="336" width="1.1" height="2" fill="#6c717b"/>
<rect x="0.0" y="339" width="2.3" height="2" fill="#595e67"/>
<rect x="3.4" y="339" width="9.2" height="2" fill="#595e67"/>
<rect x="0.0" y="342" width="6.9" height="2" fill="#815693"/>
<rect x="8.0" y="342" width="9.2" height="2" fill="#815693"/>
<rect x="18.4" y="342" width="13.8" height="2" fill="#47769d"/>
<rect x="32.2" y="342" width="8.0" height="2" fill="#6c717b"/>
<rect x="4.6" y="345" width="6.9" height="2" fill="#815693"/>
<rect x="12.6" y="345" width="4.6" height="2" fill="#47769d"/>
<rect x="17.2" y="345" width="1.1" height="2" fill="#6c717b"/>
<rect x="18.4" y="345" width="32.2" height="2" fill="#67825a"/>
<rect x="50.6" y="345" width="1.1" height="2" fill="#6c717b"/>
<rect x="52.9" y="345" width="5.8" height="2" fill="#6c717b"/>
<rect x="0.0" y="348" width="1.1" height="2" fill="#6c717b"/>
<rect x="0.0" y="351" width="11.5" height="2" fill="#595e67"/>
<rect x="0.0" y="354" width="6.9" height="2" fill="#815693"/>
<rect x="8.0" y="354" width="9.2" height="2" fill="#815693"/>
<rect x="18.4" y="354" width="12.6" height="2" fill="#47769d"/>
<rect x="31.0" y="354" width="8.0" height="2" fill="#6c717b"/>
<rect x="4.6" y="357" width="6.9" height="2" fill="#815693"/>
<rect x="12.6" y="357" width="4.6" height="2" fill="#47769d"/>
<rect x="17.2" y="357" width="1.1" height="2" fill="#6c717b"/>
<rect x="18.4" y="357" width="32.2" height="2" fill="#67825a"/>
<rect x="50.6" y="357" width="1.1" height="2" fill="#6c717b"/>
<rect x="52.9" y="357" width="5.8" height="2" fill="#6c717b"/>
<rect x="0.0" y="360" width="1.1" height="2" fill="#6c717b"/>
<rect x="0.0" y="363" width="2.3" height="2" fill="#595e67"/>
<rect x="3.4" y="363" width="9.2" height="2" fill="#595e67"/>
<rect x="0.0" y="366" width="6.9" height="2" fill="#815693"/>
<rect x="8.0" y="366" width="9.2" height="2" fill="#815693"/>
<rect x="18.4" y="366" width="14.9" height="2" fill="#47769d"/>
<rect x="33.3" y="366" width="8.0" height="2" fill="#6c717b"/>
<rect x="4.6" y="369" width="6.9" height="2" fill="#815693"/>
<rect x="12.6" y="369" width="4.6" height="2" fill="#47769d"/>
<rect x="17.2" y="369" width="1.1" height="2" fill="#6c717b"/>
<rect x="18.4" y="369" width="34.5" height="2" fill="#67825a"/>
<rect x="52.9" y="369" width="1.1" height="2" fill="#6c717b"/>
<rect x="55.2" y="369" width="5.8" height="2" fill="#6c717b"/>
<rect x="0.0" y="372" width="1.1" height="2" fill="#6c717b"/>
<rect x="0.0" y="375" width="6.9" height="2" fill="#595e67"/>
<rect x="0.0" y="378" width="6.9" height="2" fill="#815693"/>
<rect x="8.0" y="378" width="9.2" height="2" fill="#815693"/>
<rect x="18.4" y="378" width="18.4" height="2" fill="#47769d"/>
<rect x="36.8" y="378" width="8.0" height="2" fill="#6c717b"/>
<rect x="4.6" y="381" width="6.9" height="2" fill="#815693"/>
<rect x="12.6" y="381" width="4.6" height="2" fill="#47769d"/>
<rect x="17.2" y="381" width="1.1" height="2" fill="#6c717b"/>
<rect x="18.4" y="381" width="37.9" height="2" fill="#67825a"/>
<rect x="56.3" y="381" width="1.1" height="2" fill="#6c717b"/>
<rect x="58.6" y="381" width="5.8" height="2" fill="#6c717b"/>
<rect x="0.0" y="384" width="1.1" height="2" fill="#6c717b"/>
<rect x="0.0" y="387" width="2.3" height="2" fill="#595e67"/>
<rect x="3.4" y="387" width="6.9" height="2" fill="#595e67"/>
<rect x="0.0" y="390" width="6.9" height="2" fill="#815693"/>
<rect x="8.0" y="390" width="9.2" height="2" fill="#815693"/>
<rect x="18.4" y="390" width="12.6" height="2" fill="#47769d"/>
<rect x="31.0" y="390" width="8.0" height="2" fill="#6c717b"/>
<rect x="4.6" y="393" width="6.9" height="2" fill="#815693"/>
<rect x="12.6" y="393" width="4.6" height="2" fill="#47769d"/>
<rect x="17.2" y="393" width="1.1" height="2" fill="#6c717b"/>
<rect x="18.4" y="393" width="32.2" height="2" fill="#67825a"/>
<rect x="50.6" y="393" width="1.1" height="2" fill="#6c717b"/>
<rect x="52.9" y="393" width="5.8" height="2" fill="#6c717b"/>
<rect x="0.0" y="396" width="1.1" height="2" fill="#6c717b"/>
<rect x="0.0" y="399" width="11.5" height="2" fill="#595e67"/>
<rect x="0.0" y="402" width="6.9" height="2" fill="#815693"/>
<rect x="8.0" y="402" width="9.2" height="2" fill="#815693"/>
<rect x="18.4" y="402" width="13.8" height="2" fill="#47769d"/>
<rect x="32.2" y="402" width="8.0" height="2" fill="#6c717b"/>
<rect x="4.6" y="405" width="6.9" height="2" fill="#815693"/>
<rect x="12.6" y="405" width="4.6" height="2" fill="#47769d"/>
<rect x="17.2" y="405" width="1.1" height="2" fill="#6c717b"/>
<rect x="18.4" y="405" width="33.3" height="2" fill="#67825a"/>
<rect x="51.7" y="405" width="1.1" height="2" fill="#6c717b"/>
<rect x="54.0" y="405" width="5.8" height="2" fill="#6c717b"/>
<rect x="0.0" y="408" width="1.1" height="2" fill="#6c717b"/>
<rect x="0.0" y="411" width="2.3" height="2" fill="#595e67"/>
<rect x="3.4" y="411" width="9.2" height="2" fill="#595e67"/>
<rect x="0.0" y="414" width="6.9" height="2" fill="#815693"/>
<rect x="8.0" y="414" width="9.2" height="2" fill="#815693"/>
<rect x="18.4" y="414" width="12.6" height="2" fill="#47769d"/>
<rect x="31.0" y="414" width="8.0" height="2" fill="#6c717b"/>
<rect x="4.6" y="417" width="6.9" height="2" fill="#815693"/>
<rect x="12.6" y="417" width="4.6" height="2" fill="#47769d"/>
<rect x="17.2" y="417" width="1.1" height="2" fill="#6c717b"/>
<rect x="18.4" y="417" width="32.2" height="2" fill="#67825a"/>
<rect x="50.6" y="417" width="1.1" height="2" fill="#6c717b"/>
<rect x="52.9" y="417" width="5.8" height="2" fill="#6c717b"/>
<rect x="0.0" y="420" width="1.1" height="2" fill="#6c717b"/>
<rect x="0.0" y="423" width="11.5" height="2" fill="#595e67"/>
<rect x="0.0" y="426" width="6.9" height="2" fill="#815693"/>
<rect x="8.0" y="426" width="9.2" height="2" fill="#815693"/>
<rect x="18.4" y="426" width="11.5" height="2" fill="#47769d"/>
<rect x="29.9" y="426" width="8.0" height="2" fill="#6c717b"/>
<rect x="4.6" y="429" width="6.9" height="2" fill="#815693"/>
<rect x="12.6" y="429" width="4.6" height="2" fill="#47769d"/>
<rect x="17.2" y="429" width="1.1" height="2" fill="#6c717b"/>
<rect x="18.4" y="429" width="29.9" height="2" fill="#67825a"/>
<rect x="48.3" y="429" width="1.1" height="2" fill="#6c717b"/>
<rect x="50.6" y="429" width="5.8" height="2" fill="#6c717b"/>
<rect x="0.0" y="432" width="1.1" height="2" fill="#6c717b"/>
<rect x="0.0" y="435" width="2.3" height="2" fill="#595e67"/>
<rect x="3.4" y="435" width="9.2" height="2" fill="#595e67"/>
<rect x="0.0" y="438" width="6.9" height="2" fill="#815693"/>
<rect x="8.0" y="438" width="9.2" height="2" fill="#815693"/>
<rect x="18.4" y="438" width="10.3" height="2" fill="#47769d"/>
<rect x="28.7" y="438" width="8.0" height="2" fill="#6c717b"/>
<rect x="4.6" y="441" width="6.9" height="2" fill="#815693"/>
<rect x="12.6" y="441" width="4.6" height="2" fill="#47769d"/>
<rect x="17.2" y="441" width="1.1" height="2" fill="#6c717b"/>
<rect x="18.4" y="441" width="28.7" height="2" fill="#67825a"/>
<rect x="47.1" y="441" width="1.1" height="2" fill="#6c717b"/>
<rect x="49.4" y="441" width="5.8" height="2" fill="#6c717b"/>
<rect x="0.0" y="444" width="1.1" height="2" fill="#6c717b"/>
<rect x="0.0" y="447" width="11.5" height="2" fill="#595e67"/>
<rect x="0.0" y="450" width="6.9" height="2" fill="#815693"/>
<rect x="8.0" y="450" width="9.2" height="2" fill="#815693"/>
<rect x="18.4" y="450" width="16.1" height="2" fill="#47769d"/>
<rect x="34.5" y="450" width="8.0" height="2" fill="#6c717b"/>
<rect x="4.6" y="453" width="6.9" height="2" fill="#815693"/>
<rect x="12.6" y="453" width="4.6" height="2" fill="#47769d"/>
<rect x="17.2" y="453" width="1.1" height="2" fill="#6c717b"/>
<rect x="18.4" y="453" width="34.5" height="2" fill="#67825a"/>
<rect x="52.9" y="453" width="1.1" height="2" fill="#6c717b"/>
<rect x="55.2" y="453" width="5.8" height="2" fill="#6c717b"/>
<rect x="0.0" y="456" width="1.1" height="2" fill="#6c717b"/>
<rect x="0.0" y="459" width="2.3" height="2" fill="#595e67"/>
<rect x="3.4" y="459" width="9.2" height="2" fill="#595e67"/>
<rect x="0.0" y="462" width="6.9" height="2" fill="#815693"/>
<rect x="8.0" y="462" width="9.2" height="2" fill="#815693"/>
<rect x="18.4" y="462" width="11.5" height="2" fill="#47769d"/>
<rect x="29.9" y="462" width="8.0" height="2" fill="#6c717b"/>
<rect x="4.6" y="465" width="6.9" height="2" fill="#815693"/>
<rect x="12.6" y="465" width="4.6" height="2" fill="#47769d"/>
<rect x="17.2" y="465" width="1.1" height="2" fill="#6c717b"/>
<rect x="18.4" y="465" width="29.9" height="2" fill="#67825a"/>
<rect x="48.3" y="465" width="1.1" height="2" fill="#6c717b"/>
<rect x="50.6" y="465" width="5.8" height="2" fill="#6c717b"/>
<rect x="0.0" y="468" width="1.1" height="2" fill="#6c717b"/>
<rect x="0.0" y="471" width="11.5" height="2" fill="#595e67"/>
<rect x="0.0" y="474" width="6.9" height="2" fill="#815693"/>
<rect x="8.0" y="474" width="9.2" height="2" fill="#815693"/>
<rect x="18.4" y="474" width="13.8" height="2" fill="#47769d"/>
<rect x="32.2" y="474" width="8.0" height="2" fill="#6c717b"/>
<rect x="4.6" y="477" width="6.9" height="2" fill="#815693"/>
<rect x="12.6" y="477" width="4.6" height="2" fill="#47769d"/>
<rect x="17.2" y="477" width="1.1" height="2" fill="#6c717b"/>
<rect x="18.4" y="477" width="32.2" height="2" fill="#67825a"/>
<rect x="50.6" y="477" width="1.1" height="2" fill="#6c717b"/>
<rect x="52.9" y="477" width="5.8" height="2" fill="#6c717b"/>
<rect x="0.0" y="480" width="1.1" height="2" fill="#6c717b"/>
<rect x="0.0" y="483" width="2.3" height="2" fill="#595e67"/>
<rect x="3.4" y="483" width="4.6" height="2" fill="#595e67"/>
<rect x="0.0" y="486" width="6.9" height="2" fill="#815693"/>
<rect x="8.0" y="486" width="9.2" height="2" fill="#815693"/>
<rect x="18.4" y="486" width="13.8" height="2" fill="#47769d"/>
<rect x="32.2" y="486" width="8.0" height="2" fill="#6c717b"/>
<rect x="4.6" y="489" width="6.9" height="2" fill="#815693"/>
<rect x="12.6" y="489" width="4.6" height="2" fill="#47769d"/>
<rect x="17.2" y="489" width="1.1" height="2" fill="#6c717b"/>
<rect x="18.4" y="489" width="32.2" height="2" fill="#67825a"/>
<rect x="50.6" y="489" width="1.1" height="2" fill="#6c717b"/>
<rect x="52.9" y="489" width="5.8" height="2" fill="#6c717b"/>
<rect x="0.0" y="492" width="1.1" height="2" fill="#6c717b"/>
<rect x="0.0" y="495" width="11.5" height="2" fill="#595e67"/>
<rect x="0.0" y="498" width="6.9" height="2" fill="#815693"/>
<rect x="8.0" y="498" width="9.2" height="2" fill="#815693"/>
<rect x="18.4" y="498" width="11.5" height="2" fill="#47769d"/>
<rect x="29.9" y="498" width="8.0" height="2" fill="#6c717b"/>
<rect x="4.6" y="501" width="6.9" height="2" fill="#815693"/>
<rect x="12.6" y="501" width="4.6" height="2" fill="#47769d"/>
<rect x="17.2" y="501" width="1.1" height="2" fill="#6c717b"/>
<rect x="18.4" y="501" width="29.9" height="2" fill="#67825a"/>
<rect x="48.3" y="501" width="1.1" height="2" fill="#6c717b"/>
<rect x="50.6" y="501" width="5.8" height="2" fill="#6c717b"/>
<rect x="0.0" y="504" width="1.1" height="2" fill="#6c717b"/>
<rect x="0.0" y="507" width="2.3" height="2" fill="#595e67"/>
<rect x="3.4" y="507" width="9.2" height="2" fill="#595e67"/>
<rect x="0.0" y="510" width="6.9" height="2" fill="#815693"/>
<rect x="8.0" y="510" width="9.2" height="2" fill="#815693"/>
<rect x="18.4" y="510" width="13.8" height="2" fill="#47769d"/>
<rect x="32.2" y="510" width="8.0" height="2" fill="#6c717b"/>
<rect x="4.6" y="513" width="6.9" height="2" fill="#815693"/>
<rect x="12.6" y="513" width="4.6" height="2" fill="#47769d"/>
<rect x="17.2" y="513" width="1.1" height="2" fill="#6c717b"/>
<rect x="18.4" y="513" width="32.2" height="2" fill="#67825a"/>
<rect x="50.6" y="513" width="1.1" height="2" fill="#6c717b"/>
<rect x="52.9" y="513" width="5.8" height="2" fill="#6c717b"/>
<rect x="0.0" y="516" width="1.1" height="2" fill="#6c717b"/>
<rect x="0.0" y="519" width="11.5" height="2" fill="#595e67"/>
<rect x="0.0" y="522" width="6.9" height="2" fill="#815693"/>
<rect x="8.0" y="522" width="9.2" height="2" fill="#815693"/>
<rect x="18.4" y="522" width="13.8" height="2" fill="#47769d"/>
<rect x="32.2" y="522" width="8.0" height="2" fill="#6c717b"/>
<rect x="4.6" y="525" width="6.9" height="2" fill="#815693"/>
<rect x="12.6" y="525" width="4.6" height="2" fill="#47769d"/>
<rect x="17.2" y="525" width="1.1" height="2" fill="#6c717b"/>
<rect x="18.4" y="525" width="32.2" height="2" fill="#67825a"/>
<rect x="50.6" y="525" width="1.1" height="2" fill="#6c717b"/>
<rect x="52.9" y="525" width="5.8" height="2" fill="#6c717b"/>
<rect x="0.0" y="528" width="1.1" height="2" fill="#6c717b"/>
<rect x="0.0" y="531" width="2.3" height="2" fill="#595e67"/>
<rect x="3.4" y="531" width="9.2" height="2" fill="#595e67"/>
<rect x="0.0" y="534" width="6.9" height="2" fill="#815693"/>
<rect x="8.0" y="534" width="9.2" height="2" fill="#815693"/>
<rect x="18.4" y="534" width="12.6" height="2" fill="#47769d"/>
<rect x="31.0" y="534" width="8.0" height="2" fill="#6c717b"/>
<rect x="4.6" y="537" width="6.9" height="2" fill="#815693"/>
<rect x="12.6" y="537" width="4.6" height="2" fill="#47769d"/>
<rect x="17.2" y="537" width="1.1" height="2" fill="#6c717b"/>
<rect x="18.4" y="537" width="31.0" height="2" fill="#67825a"/>
<rect x="49.4" y="537" width="1.1" height="2" fill="#6c717b"/>
<rect x="51.7" y="537" width="5.8" height="2" fill="#6c717b"/>
<rect x="0.0" y="540" width="1.1" height="2" fill="#6c717b"/>
<rect x="0.0" y="543" width="11.5" height="2" fill="#595e67"/>
<rect x="0.0" y="546" width="6.9" height="2" fill="#815693"/>
<rect x="8.0" y="546" width="9.2" height="2" fill="#815693"/>
<rect x="18.4" y="546" width="13.8" height="2" fill="#47769d"/>
<rect x="32.2" y="546" width="8.0" height="2" fill="#6c717b"/>
<rect x="4.6" y="549" width="6.9" height="2" fill="#815693"/>
<rect x="12.6" y="549" width="4.6" height="2" fill="#47769d"/>
<rect x="17.2" y="549" width="1.1" height="2" fill="#6c717b"/>
<rect x="18.4" y="549" width="32.2" height="2" fill="#67825a"/>
<rect x="50.6" y="549" width="1.1" height="2" fill="#6c717b"/>
<rect x="52.9" y="549" width="5.8" height="2" fill="#6c717b"/>
<rect x="0.0" y="552" width="1.1" height="2" fill="#6c717b"/>
<rect x="0.0" y="555" width="2.3" height="2" fill="#595e67"/>
<rect x="3.4" y="555" width="9.2" height="2" fill="#595e67"/>
<rect x="0.0" y="558" width="6.9" height="2" fill="#815693"/>
<rect x="8.0" y="558" width="9.2" height="2" fill="#815693"/>
<rect x="18.4" y="558" width="12.6" height="2" fill="#47769d"/>
<rect x="31.0" y="558" width="8.0" height="2" fill="#6c717b"/>
<rect x="4.6" y="561" width="6.9" height="2" fill="#815693"/>
<rect x="12.6" y="561" width="4.6" height="2" fill="#47769d"/>
<rect x="17.2" y="561" width="1.1" height="2" fill="#6c717b"/>
<rect x="18.4" y="561" width="31.0" height="2" fill="#67825a"/>
<rect x="49.4" y="561" width="1.1" height="2" fill="#6c717b"/>
<rect x="51.7" y="561" width="5.8" height="2" fill="#6c717b"/>
<rect x="0.0" y="564" width="1.1" height="2" fill="#6c717b"/>
<rect x="0.0" y="567" width="11.5" height="2" fill="#595e67"/>
<rect x="0.0" y="570" width="6.9" height="2" fill="#815693"/>
<rect x="8.0" y="570" width="9.2" height="2" fill="#815693"/>
<rect x="18.4" y="570" width="13.8" height="2" fill="#47769d"/>
<rect x="32.2" y="570" width="8.0" height="2" fill="#6c717b"/>
<rect x="4.6" y="573" width="6.9" height="2" fill="#815693"/>
<rect x="12.6" y="573" width="4.6" height="2" fill="#47769d"/>
<rect x="17.2" y="573" width="1.1" height="2" fill="#6c717b"/>
<rect x="18.4" y="573" width="32.2" height="2" fill="#67825a"/>
<rect x="50.6" y="573" width="1.1" height="2" fill="#6c717b"/>
<rect x="52.9" y="573" width="5.8" height="2" fill="#6c717b"/>
<rect x="0.0" y="576" width="1.1" height="2" fill="#6c717b"/>
<rect x="0.0" y="579" width="2.3" height="2" fill="#595e67"/>
<rect x="3.4" y="579" width="9.2" height="2" fill="#595e67"/>
<rect x="0.0" y="582" width="6.9" height="2" fill="#815693"/>
<rect x="8.0" y="582" width="9.2" height="2" fill="#815693"/>
<rect x="18.4" y="582" width="16.1" height="2" fill="#47769d"/>
<rect x="34.5" y="582" width="8.0" height="2" fill="#6c717b"/>
<rect x="4.6" y="585" width="6.9" height="2" fill="#815693"/>
<rect x="12.6" y="585" width="4.6" height="2" fill="#47769d"/>
<rect x="17.2" y="585" width="1.1" height="2" fill="#6c717b"/>
<rect x="18.4" y="585" width="34.5" height="2" fill="#67825a"/>
<rect x="52.9" y="585" width="1.1" height="2" fill="#6c717b"/>
<rect x="55.2" y="585" width="5.8" height="2" fill="#6c717b"/>
<rect x="0.0" y="588" width="1.1" height="2" fill="#6c717b"/>
<rect x="0.0" y="591" width="6.9" height="2" fill="#595e67"/>
<rect x="0.0" y="594" width="6.9" height="2" fill="#815693"/>
<rect x="8.0" y="594" width="9.2" height="2" fill="#815693"/>
<rect x="18.4" y="594" width="9.2" height="2" fill="#47769d"/>
<rect x="27.6" y="594" width="8.0" height="2" fill="#6c717b"/>
<rect x="4.6" y="597" width="6.9" height="2" fill="#815693"/>
<rect x="12.6" y="597" width="4.6" height="2" fill="#47769d"/>
<rect x="17.2" y="597" width="1.1" height="2" fill="#6c717b"/>
<rect x="18.4" y="597" width="27.6" height="2" fill="#67825a"/>
<rect x="46.0" y="597" width="1.1" height="2" fill="#6c717b"/>
<rect x="48.3" y="597" width="5.8" height="2" fill="#6c717b"/>
<rect x="0.0" y="600" width="1.1" height="2" fill="#6c717b"/>
<rect x="0.0" y="603" width="2.3" height="2" fill="#595e67"/>
<rect x="3.4" y="603" width="9.2" height="2" fill="#595e67"/>
<rect x="0.0" y="606" width="6.9" height="2" fill="#815693"/>
<rect x="8.0" y="606" width="9.2" height="2" fill="#815693"/>
<rect x="18.4" y="606" width="13.8" height="2" fill="#47769d"/>
<rect x="32.2" y="606" width="8.0" height="2" fill="#6c717b"/>
<rect x="4.6" y="609" width="6.9" height="2" fill="#815693"/>
<rect x="12.6" y="609" width="4.6" height="2" fill="#47769d"/>
<rect x="17.2" y="609" width="1.1" height="2" fill="#6c717b"/>
<rect x="18.4" y="609" width="32.2" height="2" fill="#67825a"/>
<rect x="50.6" y="609" width="1.1" height="2" fill="#6c717b"/>
<rect x="52.9" y="609" width="5.8" height="2" fill="#6c717b"/>
<rect x="0.0" y="612" width="1.1" height="2" fill="#6c717b"/>
<rect x="0.0" y="615" width="9.2" height="2" fill="#595e67"/>
<rect x="0.0" y="618" width="6.9" height="2" fill="#815693"/>
<rect x="8.0" y="618" width="9.2" height="2" fill="#815693"/>
<rect x="18.4" y="618" width="13.8" height="2" fill="#47769d"/>
<rect x="32.2" y="618" width="8.0" height="2" fill="#6c717b"/>
<rect x="4.6" y="621" width="6.9" height="2" fill="#815693"/>
<rect x="12.6" y="621" width="4.6" height="2" fill="#47769d"/>
<rect x="17.2" y="621" width="1.1" height="2" fill="#6c717b"/>
<rect x="18.4" y="621" width="33.3" height="2" fill="#67825a"/>
<rect x="51.7" y="621" width="1.1" height="2" fill="#6c717b"/>
<rect x="54.0" y="621" width="5.8" height="2" fill="#6c717b"/>
<rect x="0.0" y="624" width="1.1" height="2" fill="#6c717b"/>
<rect x="0.0" y="627" width="2.3" height="2" fill="#595e67"/>
<rect x="3.4" y="627" width="11.5" height="2" fill="#595e67"/>
<rect x="0.0" y="630" width="6.9" height="2" fill="#815693"/>
<rect x="8.0" y="630" width="9.2" height="2" fill="#815693"/>
<rect x="18.4" y="630" width="16.1" height="2" fill="#47769d"/>
<rect x="34.5" y="630" width="8.0" height="2" fill="#6c717b"/>
<rect x="4.6" y="633" width="6.9" height="2" fill="#815693"/>
<rect x="12.6" y="633" width="4.6" height="2" fill="#47769d"/>
<rect x="17.2" y="633" width="1.1" height="2" fill="#6c717b"/>
<rect x="18.4" y="633" width="35.6" height="2" fill="#67825a"/>
<rect x="54.0" y="633" width="1.1" height="2" fill="#6c717b"/>
<rect x="56.3" y="633" width="5.8" height="2" fill="#6c717b"/>
<rect x="0.0" y="636" width="1.1" height="2" fill="#6c717b"/>
<rect x="0.0" y="639" width="6.9" height="2" fill="#595e67"/>
<rect x="0.0" y="642" width="6.9" height="2" fill="#815693"/>
<rect x="8.0" y="642" width="9.2" height="2" fill="#815693"/>
<rect x="18.4" y="642" width="11.5" height="2" fill="#47769d"/>
<rect x="29.9" y="642" width="8.0" height="2" fill="#6c717b"/>
<rect x="4.6" y="645" width="6.9" height="2" fill="#815693"/>
<rect x="12.6" y="645" width="4.6" height="2" fill="#47769d"/>
<rect x="17.2" y="645" width="1.1" height="2" fill="#6c717b"/>
<rect x="18.4" y="645" width="29.9" height="2" fill="#67825a"/>
<rect x="48.3" y="645" width="1.1" height="2" fill="#6c717b"/>
<rect x="50.6" y="645" width="5.8" height="2" fill="#6c717b"/>
<rect x="0.0" y="648" width="1.1" height="2" fill="#6c717b"/>
<rect x="0.0" y="651" width="2.3" height="2" fill="#595e67"/>
<rect x="3.4" y="651" width="9.2" height="2" fill="#595e67"/>
<rect x="0.0" y="654" width="6.9" height="2" fill="#815693"/>
<rect x="8.0" y="654" width="9.2" height="2" fill="#815693"/>
<rect x="18.4" y="654" width="16.1" height="2" fill="#47769d"/>
<rect x="34.5" y="654" width="8.0" height="2" fill="#6c717b"/>
<rect x="4.6" y="657" width="6.9" height="2" fill="#815693"/>
<rect x="12.6" y="657" width="4.6" height="2" fill="#47769d"/>
<rect x="17.2" y="657" width="1.1" height="2" fill="#6c717b"/>
<rect x="18.4" y="657" width="34.5" height="2" fill="#67825a"/>
<rect x="52.9" y="657" width="1.1" height="2" fill="#6c717b"/>
<rect x="55.2" y="657" width="5.8" height="2" fill="#6c717b"/>
<rect x="0.0" y="660" width="1.1" height="2" fill="#6c717b"/>
<rect x="0.0" y="663" width="9.2" height="2" fill="#595e67"/>
<rect x="0.0" y="666" width="6.9" height="2" fill="#815693"/>
<rect x="8.0" y="666" width="9.2" height="2" fill="#815693"/>
<rect x="18.4" y="666" width="10.3" height="2" fill="#47769d"/>
<rect x="28.7" y="666" width="8.0" height="2" fill="#6c717b"/>
<rect x="4.6" y="669" width="6.9" height="2" fill="#815693"/>
<rect x="12.6" y="669" width="4.6" height="2" fill="#47769d"/>
<rect x="17.2" y="669" width="1.1" height="2" fill="#6c717b"/>
<rect x="18.4" y="669" width="29.9" height="2" fill="#67825a"/>
<rect x="48.3" y="669" width="1.1" height="2" fill="#6c717b"/>
<rect x="50.6" y="669" width="5.8" height="2" fill="#6c717b"/>
<rect x="0.0" y="672" width="1.1" height="2" fill="#6c717b"/>
<rect x="0.0" y="675" width="2.3" height="2" fill="#595e67"/>
<rect x="3.4" y="675" width="9.2" height="2" fill="#595e67"/>
<rect x="0.0" y="678" width="6.9" height="2" fill="#815693"/>
<rect x="8.0" y="678" width="9.2" height="2" fill="#815693"/>
<rect x="18.4" y="678" width="12.6" height="2" fill="#47769d"/>
<rect x="31.0" y="678" width="8.0" height="2" fill="#6c717b"/>
<rect x="4.6" y="681" width="6.9" height="2" fill="#815693"/>
<rect x="12.6" y="681" width="4.6" height="2" fill="#47769d"/>
<rect x="17.2" y="681" width="1.1" height="2" fill="#6c717b"/>
<rect x="18.4" y="681" width="32.2" height="2" fill="#67825a"/>
<rect x="50.6" y="681" width="1.1" height="2" fill="#6c717b"/>
<rect x="52.9" y="681" width="5.8" height="2" fill="#6c717b"/>
<rect x="0.0" y="684" width="1.1" height="2" fill="#6c717b"/>
<rect x="0.0" y="702" width="2.3" height="2" fill="#595e67"/>
<rect x="3.4" y="702" width="9.2" height="2" fill="#595e67"/>
<rect x="13.8" y="702" width="6.9" height="2" fill="#595e67"/>
<rect x="0.0" y="705" width="6.9" height="2" fill="#815693"/>
<rect x="8.0" y="705" width="9.2" height="2" fill="#815693"/>
<rect x="18.4" y="705" width="12.6" height="2" fill="#47769d"/>
<rect x="31.0" y="705" width="8.0" height="2" fill="#6c717b"/>
<rect x="4.6" y="708" width="6.9" height="2" fill="#815693"/>
<rect x="12.6" y="708" width="4.6" height="2" fill="#47769d"/>
<rect x="17.2" y="708" width="1.1" height="2" fill="#6c717b"/>
<rect x="18.4" y="708" width="32.2" height="2" fill="#67825a"/>
<rect x="50.6" y="708" width="1.1" height="2" fill="#6c717b"/>
<rect x="52.9" y="708" width="5.8" height="2" fill="#6c717b"/>
<rect x="0.0" y="711" width="1.1" height="2" fill="#6c717b"/>
</svg>
</div>
<!-- ===== console ===== -->
<div id="consline"></div>
<div id="cons">
<span class="abs" style="left:23px;top:21px;line-height:16px;font-size:13px;color:#e6e9ef;white-space:pre;word-spacing:1.7px">新建文件夹 - H5</span>
<div class="abs" style="left:17px;top:40px;width:124px;height:1px;background:#528bff"></div>
<svg class="abs" style="left:1199px;top:22px" width="14" height="15" viewBox="0 0 14 15" fill="none" stroke="#c3c8d2" stroke-width="1.100"><ellipse cx="7" cy="8.500" rx="3.300" ry="5"/><path d="M7 3.500v10M4.800 4C4.800 1.500 9.200 1.500 9.200 4M3.700 6L1.200 4.500M3.700 8.500H.8M3.700 11l-2.500 1.800M10.300 6l2.500-1.500M10.300 8.500h2.900M10.300 11l2.500 1.800"/></svg>
<svg class="abs" style="left:1229px;top:22px" width="15" height="15" viewBox="0 0 15 15" fill="none" stroke="#c3c8d2" stroke-width="1.100"><path d="M2.600 3.500A6.200 6.200 0 1 1 1.300 7.500"/><path d="M2.800.800v3h3"/><path d="M6 5.200v5l4.200-2.500z" fill="#c3c8d2"/></svg>
<svg class="abs" style="left:1260px;top:23px" width="13" height="13" viewBox="0 0 13 13"><rect x=".6" y=".6" width="11.800" height="11.800" fill="none" stroke="#d5d8de" stroke-width="1.200"/><rect x="2.500" y="2.500" width="8" height="8" fill="#d5d8de"/></svg>
<svg class="abs" style="left:1289px;top:22px" width="15" height="15" viewBox="0 0 15 15" fill="none" stroke="#c3c8d2" stroke-width="1.100"><path d="M9 1.600H.600v11.800h13.800V7"/><path d="M3.500 5.500l2.500 2-2.500 2M7.500 10h3M12 0v5M9.500 2.500h5"/></svg>
<svg class="abs" style="left:1319px;top:25px" width="15" height="9" viewBox="0 0 15 9" fill="none" stroke="#c3c8d2" stroke-width="1.300"><path d="M1 8l6.500-6.500L14 8"/></svg>
<svg class="abs" style="left:1349px;top:23px" width="15" height="12" viewBox="0 0 15 12" fill="none" stroke="#c3c8d2" stroke-width="1.200"><path d="M.8 1l6.400 9M7.200 1L.8 10M11.500.5v10M8.800 7.500l2.700 3 2.700-3"/></svg>
<div id="log"><span class="e">    at Array.&lt;anonymous&gt; (</span><span class="lk">http://localhost:8080/static/js/chunk-vendors.js:4322:12</span><span class="e">)</span>
<span class="e">    at flushCallbacks (</span><span class="lk">http://localhost:8080/static/js/chunk-vendors.js:4248:14</span><span class="e">)</span>
16:44:32.712 <span class="w">false</span>  <span class="lk">at pages/login/login.vue:79</span>
16:44:32.714 <span class="w">false</span>  <span class="lk">at pages/login/login.vue:79</span>
16:44:33.037 <span class="w">false</span>  <span class="lk">at pages/login/login.vue:79</span>
16:44:33.300 <span class="w">[object]</span> <span class="lk">{"SDKVersion":"","appId":"__UNI__EC83AA2","appLanguage":"zh-Hans","appName":"<span class="cj">碳中和</span>","appVersion":"1.0.1","ap...}</span>   <span class="lk">at pages/h</span>
<span class="lk">ome/index.vue:262</span></div>
</div>

<!-- ===== web browser panel ===== -->
<div id="rp">
<div id="rph">
<div id="rptabs"><div class="abs" style="left:0;top:0;width:110px;height:29px;background:#282c34"></div>
<span class="abs" style="left:11px;top:6px;line-height:16px;color:#e6e9ef;white-space:pre;font-size:12px"><span class="l">Web</span>浏览器</span>
<svg class="abs" style="left:87px;top:10px" width="10" height="10" viewBox="0 0 10 10" fill="none" stroke="#c3c8d2" stroke-width="1.100"><path d="M1 1l8 8M9 1L1 9"/></svg>
</div>
<div class="abs l" style="left:6px;top:35px;width:530px;height:27px;border:1px solid #4f5666;color:#eceff4;line-height:25px;padding-left:8px;white-space:pre;letter-spacing:.22px">http://localhost:8080/#/pages/mine/index</div>
<div class="abs l" style="left:6px;top:67px;width:120px;height:27px;border:1px solid #4f5666;color:#eceff4;line-height:25px;padding-left:5px;white-space:pre">iPhone X</div>
<svg class="abs" style="left:114px;top:79px" width="7" height="4" viewBox="0 0 7 4"><path d="M0 0h7L3.500 4z" fill="#d5d8de"/></svg>
<svg class="abs" style="left:137px;top:73px" width="15" height="15" viewBox="0 0 15 15" fill="none" stroke="#d5d8de" stroke-width="1.200"><path d="M5.500 2H14v12H2V7.500"/><path d="M1 1l7 7M1 6V1h5"/></svg>
<svg class="abs" style="left:167px;top:73px" width="15" height="15" viewBox="0 0 15 15" fill="none" stroke="#d5d8de" stroke-width="1.200"><circle cx="7.500" cy="7.500" r="2.300"/><path d="M6.300 1h2.400l.4 1.800 1.300.7 1.700-.7 1.300 2-1.300 1.300v1.500l1.300 1.300-1.300 2-1.700-.7-1.300.7-.4 1.800H6.300l-.4-1.800-1.300-.7-1.700.7-1.300-2 1.300-1.300V6.800L1.600 5.500l1.300-2 1.700.7 1.300-.7z"/></svg>
<svg class="abs" style="left:198px;top:74px" width="15" height="13" viewBox="0 0 15 13" fill="none" stroke="#d5d8de" stroke-width="1.200"><rect x=".6" y=".6" width="13.800" height="11.800"/><path d="M3.500 3.500L6 6 3.500 8.500M7.500 9h4"/></svg>
<svg class="abs" style="left:228px;top:75px" width="15" height="11" viewBox="0 0 15 11" fill="none" stroke="#d5d8de" stroke-width="1.300"><path d="M1 5.500h13.500M5.500 1L1 5.500 5.500 10"/></svg>
<svg class="abs" style="left:257px;top:75px" width="15" height="11" viewBox="0 0 15 11" fill="none" stroke="#d5d8de" stroke-width="1.300"><path d="M.5 5.500H14M9.500 1L14 5.500 9.500 10"/></svg>
<svg class="abs" style="left:288px;top:73px" width="15" height="15" viewBox="0 0 15 15" fill="none" stroke="#d5d8de" stroke-width="1.300"><path d="M12.800 9.500A6 6 0 1 1 11.500 3"/><path d="M12.500.5v3.300H9.200"/></svg>
<svg class="abs" style="left:319px;top:72px" width="11" height="16" viewBox="0 0 11 16" fill="none" stroke="#d5d8de" stroke-width="1.300"><rect x=".7" y="7.500" width="9.600" height="7.800"/><path d="M2.500 7.500V4a3 3 0 0 1 6-.5"/></svg>
<svg class="abs" style="left:348px;top:73px" width="14" height="14" viewBox="0 0 14 14" fill="none" stroke="#d5d8de" stroke-width="1.300"><rect x=".7" y=".7" width="4.600" height="4.600"/><rect x="8.700" y=".7" width="4.600" height="4.600"/><rect x=".7" y="8.700" width="4.600" height="4.600"/><path d="M8 8.700h2.500v2M13.300 8v2.500M8 13.300h2M12 12.500h2" /></svg>
</div>
<!-- phone -->
<div id="phone">
 <div id="banner"><div id="stripes"></div>
  <svg class="abs" style="left:0;top:0" width="110" height="45" viewBox="0 0 110 45">
   <circle cx="60.700" cy="-10" r="19.200" fill="#fbb42b"/><circle cx="60.700" cy="-12" r="16" fill="#fdbd35" opacity=".6"/>
   <path d="M20 0h17.300c1.800 3 2.800 6 3.200 9.300h-2.300C35.500 5 30 2 21.500 2.300z" fill="#12d38c"/>
   <path d="M37.300 0h3.100l2.100 9.300h-2z" fill="#ff9a14"/>
   <path d="M40.400 0H47l.5 9.300h-5z" fill="#ffd436"/>
   <path d="M77 0h9.400L77 9.300h-5.500z" fill="#ff2cdc"/>
   <path d="M33.500 7.200h50.500l2 3H31.500z" fill="#f6a52a"/>
   <defs><linearGradient id="bx" x1="0" y1="0" x2="0" y2="1"><stop offset="0" stop-color="#ffc326"/><stop offset=".55" stop-color="#ffbf28"/><stop offset="1" stop-color="#f7a629"/></linearGradient></defs>
   <rect x="29.200" y="10" width="58.600" height="23.700" fill="url(#bx)"/>
   <path d="M29.700 10v23M87.300 10v23" stroke="#ffd98a" stroke-width="1" opacity=".8"/>
  </svg>
  <span class="abs" style="left:125px;top:-7px;font-size:18px;line-height:26px;font-weight:bold;color:#fff;white-space:pre;text-shadow:0 1px 2px rgba(230,160,20,.6)">每日签到，领奖励</span>
 </div>
 <div id="phead">
  <div class="abs" style="left:15px;top:34px;width:20px;height:3px;border-radius:2px;background:#3ab070"></div>
  <div class="abs" style="left:15px;top:43px;width:20px;height:3px;border-radius:2px;background:#3ab070"></div>
  <div class="abs" style="left:15px;top:52px;width:20px;height:3px;border-radius:2px;background:#3ab070"></div>
  <span class="abs" style="left:54px;top:32px;font-size:18px;line-height:26px;color:#333;white-space:pre">我的</span>
  <svg class="abs" style="left:340px;top:28px" width="20" height="21" viewBox="0 0 20 21" fill="none" stroke="#3ab070" stroke-width="1.300"><path d="M3.500 9.500V8.500a6.500 6.500 0 0 1 13 0v5.500c0 3-2.500 4.500-6 4.700"/><rect x="1.700" y="8.500" width="2.600" height="5" rx="1.300"/><rect x="15.700" y="8.500" width="2.600" height="5" rx="1.300"/><circle cx="9.500" cy="18.700" r="1.200" fill="#3ab070"/></svg>
 </div>
 <span class="abs" style="left:15px;top:135px;font-size:16px;line-height:24px;color:#222;white-space:pre">我的银行卡</span>
 <span class="abs" style="left:321px;top:135px;font-size:14px;line-height:24px;color:#222;white-space:pre">管理</span>
 <svg class="abs" style="left:354px;top:140px" width="7" height="13" viewBox="0 0 7 13" fill="none" stroke="#3ab070" stroke-width="1.500"><path d="M1 1l5 5.500L1 12"/></svg>
 <div id="card">
  <span class="abs" style="left:15px;top:15px;font-size:14px;line-height:22px;font-weight:bold;color:#fff;white-space:pre">建设银行</span>
  <div class="abs" style="left:308px;top:15px;width:22px;height:22px;border-radius:50%;background:linear-gradient(#fff 45%,#e4e4e4)"></div>
  <svg class="abs" style="left:316px;top:21px" width="7" height="11" viewBox="0 0 7 11" fill="none" stroke="#3ab070" stroke-width="1.500"><path d="M1 1l4.500 4.500L1 10"/></svg>
  <span class="abs" style="left:124px;top:51px;font-size:18px;line-height:24px;color:#fff;white-space:pre;font-family:'Liberation Serif','Noto Serif CJK SC',serif"><span style="font-size:14px;font-weight:bold;letter-spacing:-.67px;word-spacing:1.2px">···· ···· ···· </span>9640</span>
 </div>
 <span class="row" style="top:289px">我的团队</span>
 <span class="row" style="top:338px">实名认证</span>
 <span class="row" style="top:387px">我的邀请码</span>
 <span class="row" style="top:436px">修改密码</span>
 <span class="row" style="top:485px">购买记录</span>
 <span class="row" style="top:534px">明细</span>
 <span class="row" style="top:583px">提现记录</span>
 <span class="row" style="top:632px">账号信息</span>
 <!-- row icons -->
 <svg class="abs" style="left:342px;top:291px" width="19" height="19" viewBox="0 0 19 19" fill="#3ab070"><ellipse cx="15.500" cy="9" rx="2.600" ry="4.300"/><ellipse cx="15.500" cy="15.200" rx="2.800" ry="2.300"/><path d="M6.900.700a5.850 5.850 0 0 1 3.400 10.600c2.200.600 3.600 1.900 3.600 3.600 0 2-3 3.700-7 3.700s-7-1.700-7-3.700c0-1.700 1.400-3 3.600-3.600A5.850 5.850 0 0 1 6.900.700z" stroke="#fff" stroke-width="1.200" paint-order="stroke"/><path d="M4.100 8.200c1.300 2.600 4.300 2.600 5.600 0" fill="none" stroke="#d9f2e5" stroke-width="1.100"/></svg>
 <svg class="abs" style="left:343px;top:341px" width="16" height="18" viewBox="0 0 16 18"><path d="M8 0l7.500 2.500v6c0 5-4 8-7.500 9.500C4.500 16.500.5 13.500.5 8.500v-6z" fill="#3ab070"/><path d="M4.500 8.500l2.700 2.700 4.500-4.500" fill="none" stroke="#fff" stroke-width="1.700"/></svg>
 <svg class="abs" style="left:343px;top:389px" width="18" height="18" viewBox="0 0 18 18" fill="#3ab070"><circle cx="8" cy="4.500" r="4.300"/><path d="M0 18c0-5 3-8.500 8-8.500 1.500 0 2.500.3 3 .8L9 18z"/><path d="M14 9l4 4.500h-2.500V18h-3v-4.500H10z"/></svg>
 <svg class="abs" style="left:343px;top:438px" width="18" height="18" viewBox="0 0 18 18"><circle cx="9" cy="9" r="9" fill="#3ab070"/><circle cx="11" cy="7" r="2.500" fill="none" stroke="#fff" stroke-width="1.600"/><path d="M9.300 8.800L4.500 13.500" stroke="#fff" stroke-width="1.700"/></svg>
 <svg class="abs" style="left:343px;top:487px" width="19" height="20" viewBox="0 0 19 20"><rect x=".1" y="1" width="13.100" height="17.800" rx="1.600" fill="#3ab070"/><path d="M3.200 5.800h7.300M3.200 9.900h7.300M3.200 14.200h5.200" stroke="#a9e0c2" stroke-width="1.700"/><path d="M15.200 10.200l-4 7.100" stroke="#fff" stroke-width="5.200" stroke-linecap="round"/><path d="M15.200 10.200l-4 7.100" stroke="#3ab070" stroke-width="3.300" stroke-linecap="round"/></svg>
 <svg class="abs" style="left:344px;top:537px" width="15" height="18" viewBox="0 0 15 18"><path d="M0 1.500C0 .5.500 0 1.500 0h12c1 0 1.500.5 1.500 1.500V18l-2.500-1.800L10 18l-2.500-1.800L5 18l-2.500-1.800L0 18z" fill="#3ab070"/><path d="M2.500 4h7M2.500 7.500h5" stroke="#b8ecd0" stroke-width="1.600"/></svg>
 <svg class="abs" style="left:343px;top:585px" width="19" height="20" viewBox="0 0 19 20"><path d="M1.900 1h7.200v4.500h4.200v12.100H1.900a1.500 1.500 0 0 1-1.500-1.500V2.500A1.500 1.500 0 0 1 1.900 1z" fill="#3ab070"/><path d="M10.100 1.300l3.100 3.200h-3.100z" fill="#3ab070"/><path d="M3.200 8.400h7M3.200 12.700h5" stroke="#d3f0e1" stroke-width="1.700"/><circle cx="12.700" cy="14.500" r="4.400" fill="#3ab070" stroke="#fff" stroke-width="1"/><path d="M10.800 16.400l3.300-3.300M11.800 12.800h2.600v2.600" fill="none" stroke="#fff" stroke-width="1.100"/></svg>
 <svg class="abs" style="left:343px;top:634px" width="19" height="20" viewBox="0 0 19 20"><rect x=".1" y="1" width="13.100" height="17.800" rx="1.600" fill="#3ab070"/><path d="M3.200 5.800h7.300M3.200 9.900h7.300M3.200 14.200h5.200" stroke="#a9e0c2" stroke-width="1.700"/><path d="M15.200 10.200l-4 7.100" stroke="#fff" stroke-width="5.200" stroke-linecap="round"/><path d="M15.200 10.200l-4 7.100" stroke="#3ab070" stroke-width="3.300" stroke-linecap="round"/></svg>
 <div class="abs" style="left:17px;top:683px;width:341px;height:44px;border-radius:22px;background:#f7f7f7;color:#c0c0c0;font-size:16px;line-height:44px;text-align:center">退出登录</div>
 <div id="ptab">
  <svg class="abs" style="left:35px;top:10px" width="24" height="24" viewBox="0 0 24 24" fill="none" stroke="#b0b0b0" stroke-width="2.200" stroke-linejoin="round" stroke-linecap="round"><path d="M1 11.500L12 1.500l11 10"/><path d="M3.500 10v12.500h17V10"/><path d="M17 3v3"/></svg>
  <svg class="abs" style="left:129px;top:10px" width="22" height="24" viewBox="0 0 22 24" fill="none" stroke="#b0b0b0" stroke-width="2.200" stroke-linejoin="round" stroke-linecap="round"><rect x="1" y="1" width="20" height="22" rx="2"/><path d="M6 8h10M6 13h10M6 18h6"/></svg>
  <svg class="abs" style="left:220px;top:10px" width="28" height="24" viewBox="0 0 28 24" fill="none" stroke="#b0b0b0" stroke-width="2.200" stroke-linejoin="round" stroke-linecap="round"><path d="M4.500 9.500a9.500 9.500 0 0 1 19 0M22 16c-1 4-4 6.500-9.500 6.500"/><rect x="1.500" y="9.500" width="3.500" height="7" rx="1.700"/><rect x="23" y="9.500" width="3.500" height="7" rx="1.700"/></svg>
  <svg class="abs" style="left:316px;top:9px" width="24" height="25" viewBox="0 0 24 25" fill="none" stroke="#3ab070" stroke-width="2.200"><circle cx="12" cy="7.500" r="6"/><path d="M1.500 25c0-6.500 4.500-11 10.500-11s10.500 4.500 10.500 11"/></svg>
  <span class="pt" style="left:22px">首页</span><span class="pt" style="left:115px">认购</span><span class="pt" style="left:210px">客服</span><span class="pt" style="left:304px;color:#3ab070">我的</span>
 </div>
</div>
</div>

<!-- ===== status bar ===== -->
<div id="status">
<svg class="abs" style="left:28px;top:5px" width="14" height="14" viewBox="0 0 14 14"><circle cx="7" cy="7" r="6.400" fill="none" stroke="#b9bfca" stroke-width="1.200"/><circle cx="7" cy="5.300" r="2.500" fill="#b9bfca"/><path d="M2.300 11.300C3 8.500 11 8.500 11.700 11.300 9.500 13.800 4.500 13.800 2.300 11.300z" fill="#b9bfca"/></svg>
<span class="st l" style="left:48px;letter-spacing:-.3px">jocat_cn@163.com</span>
<svg class="abs" style="left:215px;top:6px" width="13" height="12" viewBox="0 0 13 12" fill="none" stroke="#b9bfca" stroke-width="1.100"><path d="M.5 1.500h2M.5 6h2M.5 10.500h2M5 1.500h8M5 6h8M5 10.500h8"/></svg>
<svg class="abs" style="left:240px;top:6px" width="14" height="12" viewBox="0 0 14 12" fill="none" stroke="#b9bfca" stroke-width="1.100"><rect x=".6" y=".6" width="12.800" height="10.800"/><path d="M3 3.500l2.500 2L3 7.500M7 8.500h3.500"/></svg>
<svg class="abs" style="left:265px;top:5px" width="17" height="15" viewBox="0 0 17 15" fill="none" stroke="#b9bfca" stroke-width="1.100"><path d="M6 13A6.200 6.200 0 1 1 13.300 6M.8 7h7.500M7 .8C4 4 4 9.500 6 13M7 .8c1.500 1.500 2.300 3.300 2.500 5"/><path d="M9.500 14h5.300a2.200 2.200 0 0 0 .2-4.400 3 3 0 0 0-5.800-.3 2.400 2.400 0 0 0 .3 4.700z"/></svg>
<span class="st" style="left:1549px">语法提示库</span>
<span class="st" style="left:1635px">行:1</span>
<span class="st" style="left:1667px">列:1</span>
<span class="st l" style="left:1715px">UTF-8</span>
<span class="st l" style="left:1775px;letter-spacing:-.3px">JavaScript</span>
<svg class="abs" style="left:1851px;top:3px" width="18" height="17" viewBox="0 0 18 17"><circle cx="7.500" cy="9.500" r="7" fill="#b9bfca"/><path d="M7.500 5.500v7M4.800 10l2.700 2.700 2.700-2.700" fill="none" stroke="#21252b" stroke-width="1.200"/><circle cx="13.500" cy="3.500" r="2.600" fill="#f0472d"/></svg>
<svg class="abs" style="left:1882px;top:4px" width="13" height="15" viewBox="0 0 13 15"><path d="M6.500 0C3.500 0 2 2.500 2 5.500c0 3-1 4-2 5.500h13c-1-1.500-2-2.500-2-5.500C11 2.500 9.500 0 6.500 0zM4.500 12.500a2 2 0 0 0 4 0z" fill="#b9bfca"/></svg>
</div>
<div id="bottom"></div>

<!-- ===== IME floating widget ===== -->
<div id="ime">
<span class="abs" style="left:16px;top:11px;font-size:14px;line-height:18px;color:#fff;font-family:'Liberation Sans','Noto Sans CJK SC',sans-serif">中</span>
<svg class="abs" style="left:14px;top:42px" width="16" height="17" viewBox="0 0 16 17"><path d="M7.500.500c5 1 7.500 5 6.500 9.500-1 4-4.500 6-8 6 3.500-2 5-5 4.500-9C10 4 9 2 7.500.5z" fill="#fff"/></svg>
<svg class="abs" style="left:47px;top:46px" width="14" height="12" viewBox="0 0 14 12"><path d="M3.500 0C5 1.500 9 1.500 10.500 0L14 2.500 12 5.500l-1-.5V12H3V5L2 5.500 0 2.500z" fill="#fff"/></svg>
<svg class="abs" style="left:59px;top:0px" width="74" height="66" viewBox="0 0 74 66" fill="none" stroke="#d0d0d0" stroke-width=".9"><path d="M2.300 3.800L70.500 8.800 32.200 65.100zM9 13.800l49.300-4-20.600 44.800zM2.300 3.800l56 6M9 13.800L32.200 65.100M58.300 9.800l12.200-1M37.700 54.600l-5.500 10.500"/></svg>
</div>

<svg id="wm" width="1920" height="1040" viewBox="0 0 1920 1040" style="overflow:hidden"><g font-family="'Liberation Serif','Noto Serif CJK SC',serif" font-size="40" font-weight="300" fill="#000" opacity=".58">
<text transform="rotate(45) translate(-78.8,-1226.3)" y="0" rotate="-9"><tspan x="6.0 58.0 110.0 162.0">玖福源码</tspan><tspan font-size="38" font-weight="400" rotate="-4" x="201.8 226.8 251.8 281.8 306.0 334.2 356.0 375.7 406.8 432.1 456.0 475.7">www.9fym.com</tspan></text>
<text transform="rotate(45) translate(808.2,-1226.3)" y="0" rotate="-9"><tspan x="6.0 58.0 110.0 162.0">玖福源码</tspan><tspan font-size="38" font-weight="400" rotate="-4" x="201.8 226.8 251.8 281.8 306.0 334.2 356.0 375.7 406.8 432.1 456.0 475.7">www.9fym.com</tspan></text>
<text transform="rotate(45) translate(1686.2,-1226.3)" y="0" rotate="-9"><tspan x="6.0 58.0 110.0 162.0">玖福源码</tspan><tspan font-size="38" font-weight="400" rotate="-4" x="201.8 226.8 251.8 281.8 306.0 334.2 356.0 375.7 406.8 432.1 456.0 475.7">www.9fym.com</tspan></text>
<text transform="rotate(45) translate(-78.8,-1026.9)" y="0" rotate="-9"><tspan x="6.0 58.0 110.0 162.0">玖福源码</tspan><tspan font-size="38" font-weight="400" rotate="-4" x="201.8 226.8 251.8 281.8 306.0 334.2 356.0 375.7 406.8 432.1 456.0 475.7">www.9fym.com</tspan></text>
<text transform="rotate(45) translate(808.2,-1026.9)" y="0" rotate="-9"><tspan x="6.0 58.0 110.0 162.0">玖福源码</tspan><tspan font-size="38" font-weight="400" rotate="-4" x="201.8 226.8 251.8 281.8 306.0 334.2 356.0 375.7 406.8 432.1 456.0 475.7">www.9fym.com</tspan></text>
<text transform="rotate(45) translate(1686.2,-1026.9)" y="0" rotate="-9"><tspan x="6.0 58.0 110.0 162.0">玖福源码</tspan><tspan font-size="38" font-weight="400" rotate="-4" x="201.8 226.8 251.8 281.8 306.0 334.2 356.0 375.7 406.8 432.1 456.0 475.7">www.9fym.com</tspan></text>
<text transform="rotate(45) translate(-78.8,-827.5)" y="0" rotate="-9"><tspan x="6.0 58.0 110.0 162.0">玖福源码</tspan><tspan font-size="38" font-weight="400" rotate="-4" x="201.8 226.8 251.8 281.8 306.0 334.2 356.0 375.7 406.8 432.1 456.0 475.7">www.9fym.com</tspan></text>
<text transform="rotate(45) translate(808.2,-827.5)" y="0" rotate="-9"><tspan x="6.0 58.0 110.0 162.0">玖福源码</tspan><tspan font-size="38" font-weight="400" rotate="-4" x="201.8 226.8 251.8 281.8 306.0 334.2 356.0 375.7 406.8 432.1 456.0 475.7">www.9fym.com</tspan></text>
<text transform="rotate(45) translate(1686.2,-827.5)" y="0" rotate="-9"><tspan x="6.0 58.0 110.0 162.0">玖福源码</tspan><tspan font-size="38" font-weight="400" rotate="-4" x="201.8 226.8 251.8 281.8 306.0 334.2 356.0 375.7 406.8 432.1 456.0 475.7">www.9fym.com</tspan></text>
<text transform="rotate(45) translate(-78.8,-628.1)" y="0" rotate="-9"><tspan x="6.0 58.0 110.0 162.0">玖福源码</tspan><tspan font-size="38" font-weight="400" rotate="-4" x="201.8 226.8 251.8 281.8 306.0 334.2 356.0 375.7 406.8 432.1 456.0 475.7">www.9fym.com</tspan></text>
<text transform="rotate(45) translate(808.2,-628.1)" y="0" rotate="-9"><tspan x="6.0 58.0 110.0 162.0">玖福源码</tspan><tspan font-size="38" font-weight="400" rotate="-4" x="201.8 226.8 251.8 281.8 306.0 334.2 356.0 375.7 406.8 432.1 456.0 475.7">www.9fym.com</tspan></text>
<text transform="rotate(45) translate(1686.2,-628.1)" y="0" rotate="-9"><tspan x="6.0 58.0 110.0 162.0">玖福源码</tspan><tspan font-size="38" font-weight="400" rotate="-4" x="201.8 226.8 251.8 281.8 306.0 334.2 356.0 375.7 406.8 432.1 456.0 475.7">www.9fym.com</tspan></text>
<text transform="rotate(45) translate(-78.8,-428.6)" y="0" rotate="-9"><tspan x="6.0 58.0 110.0 162.0">玖福源码</tspan><tspan font-size="38" font-weight="400" rotate="-4" x="201.8 226.8 251.8 281.8 306.0 334.2 356.0 375.7 406.8 432.1 456.0 475.7">www.9fym.com</tspan></text>
<text transform="rotate(45) translate(808.2,-428.6)" y="0" rotate="-9"><tspan x="6.0 58.0 110.0 162.0">玖福源码</tspan><tspan font-size="38" font-weight="400" rotate="-4" x="201.8 226.8 251.8 281.8 306.0 334.2 356.0 375.7 406.8 432.1 456.0 475.7">www.9fym.com</tspan></text>
<text transform="rotate(45) translate(1686.2,-428.6)" y="0" rotate="-9"><tspan x="6.0 58.0 110.0 162.0">玖福源码</tspan><tspan font-size="38" font-weight="400" rotate="-4" x="201.8 226.8 251.8 281.8 306.0 334.2 356.0 375.7 406.8 432.1 456.0 475.7">www.9fym.com</tspan></text>
<text transform="rotate(45) translate(-78.8,-229.2)" y="0" rotate="-9"><tspan x="6.0 58.0 110.0 162.0">玖福源码</tspan><tspan font-size="38" font-weight="400" rotate="-4" x="201.8 226.8 251.8 281.8 306.0 334.2 356.0 375.7 406.8 432.1 456.0 475.7">www.9fym.com</tspan></text>
<text transform="rotate(45) translate(808.2,-229.2)" y="0" rotate="-9"><tspan x="6.0 58.0 110.0 162.0">玖福源码</tspan><tspan font-size="38" font-weight="400" rotate="-4" x="201.8 226.8 251.8 281.8 306.0 334.2 356.0 375.7 406.8 432.1 456.0 475.7">www.9fym.com</tspan></text>
<text transform="rotate(45) translate(1686.2,-229.2)" y="0" rotate="-9"><tspan x="6.0 58.0 110.0 162.0">玖福源码</tspan><tspan font-size="38" font-weight="400" rotate="-4" x="201.8 226.8 251.8 281.8 306.0 334.2 356.0 375.7 406.8 432.1 456.0 475.7">www.9fym.com</tspan></text>
<text transform="rotate(45) translate(-78.8,-29.8)" y="0" rotate="-9"><tspan x="6.0 58.0 110.0 162.0">玖福源码</tspan><tspan font-size="38" font-weight="400" rotate="-4" x="201.8 226.8 251.8 281.8 306.0 334.2 356.0 375.7 406.8 432.1 456.0 475.7">www.9fym.com</tspan></text>
<text transform="rotate(45) translate(808.2,-29.8)" y="0" rotate="-9"><tspan x="6.0 58.0 110.0 162.0">玖福源码</tspan><tspan font-size="38" font-weight="400" rotate="-4" x="201.8 226.8 251.8 281.8 306.0 334.2 356.0 375.7 406.8 432.1 456.0 475.7">www.9fym.com</tspan></text>
<text transform="rotate(45) translate(1686.2,-29.8)" y="0" rotate="-9"><tspan x="6.0 58.0 110.0 162.0">玖福源码</tspan><tspan font-size="38" font-weight="400" rotate="-4" x="201.8 226.8 251.8 281.8 306.0 334.2 356.0 375.7 406.8 432.1 456.0 475.7">www.9fym.com</tspan></text>
<text transform="rotate(45) translate(-78.8,169.6)" y="0" rotate="-9"><tspan x="6.0 58.0 110.0 162.0">玖福源码</tspan><tspan font-size="38" font-weight="400" rotate="-4" x="201.8 226.8 251.8 281.8 306.0 334.2 356.0 375.7 406.8 432.1 456.0 475.7">www.9fym.com</tspan></text>
<text transform="rotate(45) translate(808.2,169.6)" y="0" rotate="-9"><tspan x="6.0 58.0 110.0 162.0">玖福源码</tspan><tspan font-size="38" font-weight="400" rotate="-4" x="201.8 226.8 251.8 281.8 306.0 334.2 356.0 375.7 406.8 432.1 456.0 475.7">www.9fym.com</tspan></text>
<text transform="rotate(45) translate(1686.2,169.6)" y="0" rotate="-9"><tspan x="6.0 58.0 110.0 162.0">玖福源码</tspan><tspan font-size="38" font-weight="400" rotate="-4" x="201.8 226.8 251.8 281.8 306.0 334.2 356.0 375.7 406.8 432.1 456.0 475.7">www.9fym.com</tspan></text>
<text transform="rotate(45) translate(-78.8,369.0)" y="0" rotate="-9"><tspan x="6.0 58.0 110.0 162.0">玖福源码</tspan><tspan font-size="38" font-weight="400" rotate="-4" x="201.8 226.8 251.8 281.8 306.0 334.2 356.0 375.7 406.8 432.1 456.0 475.7">www.9fym.com</tspan></text>
<text transform="rotate(45) translate(808.2,369.0)" y="0" rotate="-9"><tspan x="6.0 58.0 110.0 162.0">玖福源码</tspan><tspan font-size="38" font-weight="400" rotate="-4" x="201.8 226.8 251.8 281.8 306.0 334.2 356.0 375.7 406.8 432.1 456.0 475.7">www.9fym.com</tspan></text>
<text transform="rotate(45) translate(1686.2,369.0)" y="0" rotate="-9"><tspan x="6.0 58.0 110.0 162.0">玖福源码</tspan><tspan font-size="38" font-weight="400" rotate="-4" x="201.8 226.8 251.8 281.8 306.0 334.2 356.0 375.7 406.8 432.1 456.0 475.7">www.9fym.com</tspan></text>
<text transform="rotate(45) translate(-78.8,568.4)" y="0" rotate="-9"><tspan x="6.0 58.0 110.0 162.0">玖福源码</tspan><tspan font-size="38" font-weight="400" rotate="-4" x="201.8 226.8 251.8 281.8 306.0 334.2 356.0 375.7 406.8 432.1 456.0 475.7">www.9fym.com</tspan></text>
<text transform="rotate(45) translate(808.2,568.4)" y="0" rotate="-9"><tspan x="6.0 58.0 110.0 162.0">玖福源码</tspan><tspan font-size="38" font-weight="400" rotate="-4" x="201.8 226.8 251.8 281.8 306.0 334.2 356.0 375.7 406.8 432.1 456.0 475.7">www.9fym.com</tspan></text>
<text transform="rotate(45) translate(1686.2,568.4)" y="0" rotate="-9"><tspan x="6.0 58.0 110.0 162.0">玖福源码</tspan><tspan font-size="38" font-weight="400" rotate="-4" x="201.8 226.8 251.8 281.8 306.0 334.2 356.0 375.7 406.8 432.1 456.0 475.7">www.9fym.com</tspan></text>
<text transform="rotate(45) translate(-78.8,767.8)" y="0" rotate="-9"><tspan x="6.0 58.0 110.0 162.0">玖福源码</tspan><tspan font-size="38" font-weight="400" rotate="-4" x="201.8 226.8 251.8 281.8 306.0 334.2 356.0 375.7 406.8 432.1 456.0 475.7">www.9fym.com</tspan></text>
<text transform="rotate(45) translate(808.2,767.8)" y="0" rotate="-9"><tspan x="6.0 58.0 110.0 162.0">玖福源码</tspan><tspan font-size="38" font-weight="400" rotate="-4" x="201.8 226.8 251.8 281.8 306.0 334.2 356.0 375.7 406.8 432.1 456.0 475.7">www.9fym.com</tspan></text>
<text transform="rotate(45) translate(1686.2,767.8)" y="0" rotate="-9"><tspan x="6.0 58.0 110.0 162.0">玖福源码</tspan><tspan font-size="38" font-weight="400" rotate="-4" x="201.8 226.8 251.8 281.8 306.0 334.2 356.0 375.7 406.8 432.1 456.0 475.7">www.9fym.com</tspan></text>
</g></svg>
</body>
</html>
